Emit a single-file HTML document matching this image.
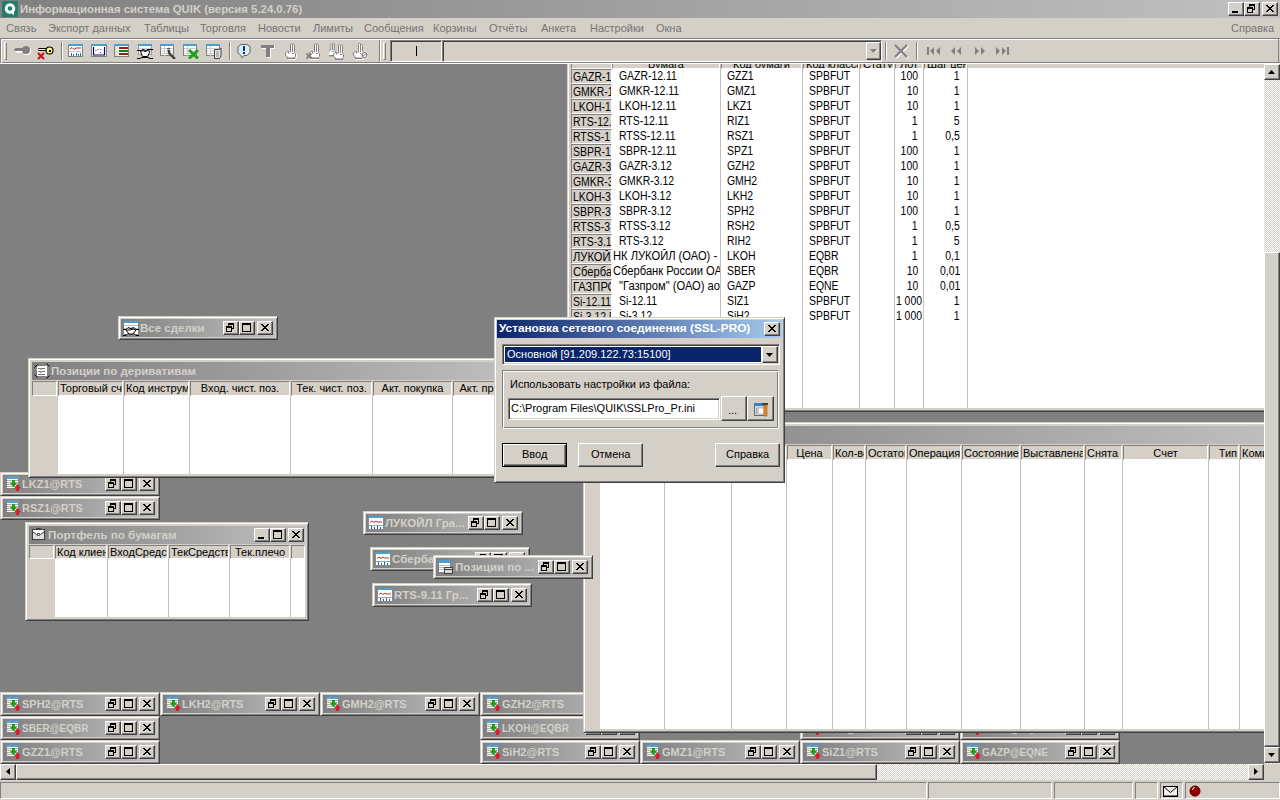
<!DOCTYPE html><html><head><meta charset="utf-8"><style>
*{margin:0;padding:0;box-sizing:content-box}
html,body{width:1280px;height:800px;overflow:hidden;background:#808080;position:relative;font-family:"Liberation Sans",sans-serif}
.a{position:absolute}
.t{font-size:11px;line-height:13px;color:#000;white-space:nowrap}
.tb{font-size:11px;line-height:13px;color:#d4d0c8;font-weight:bold;white-space:nowrap}
.frm{background:#d4d0c8;box-sizing:border-box;border:1px solid;border-color:#d4d0c8 #404040 #404040 #d4d0c8;box-shadow:inset 1px 1px #fff,inset -1px -1px #808080}
.cap{background:linear-gradient(to right,#808080,#c0c0c0)}
.btn{background:#d4d0c8;box-sizing:border-box;border:1px solid;border-color:#fff #404040 #404040 #fff;box-shadow:inset -1px -1px #808080,inset 1px 1px #d4d0c8}
.pbtn{background:#d4d0c8;box-sizing:border-box;border:1px solid;border-color:#fff #404040 #404040 #fff;box-shadow:inset -1px -1px #808080}
.sunk{box-sizing:border-box;border:1px solid;border-color:#808080 #fff #fff #808080;box-shadow:inset 1px 1px #404040,inset -1px -1px #d4d0c8}
.hc{background:#d4d0c8;box-sizing:border-box;border:1px solid;border-color:#808080 #fff #fff #808080;font-size:11px;line-height:12px;white-space:nowrap;overflow:hidden;color:#000}
.dith{background-color:#fff;background-image:linear-gradient(45deg,#d4d0c8 25%,transparent 25%,transparent 75%,#d4d0c8 75%),linear-gradient(45deg,#d4d0c8 25%,transparent 25%,transparent 75%,#d4d0c8 75%);background-size:2px 2px;background-position:0 0,1px 1px}
.m{font-size:11px;line-height:13px;color:#747474;white-space:nowrap}
.vl{background:#c0c0c0}
.cl{font-size:12px;line-height:15px;height:15px;white-space:nowrap;overflow:hidden;color:#000}
.cr{font-size:12px;line-height:15px;height:15px;white-space:nowrap;overflow:hidden;color:#000;text-align:right}
.sx{display:inline-block}
.cl .sx,.cr .sxr{transform:scaleX(0.87);transform-origin:0 0}
.cr .sxr{transform-origin:100% 0}
.sxr{display:inline-block}
</style></head><body>

<div class="a " style="left:0px;top:0px;width:1280px;height:18px;background:linear-gradient(to right,#808080,#c0c0c0)"></div>
<svg class="a" style="left:2px;top:1px" width="16" height="16" viewBox="0 0 16 16"><rect x="0" y="0" width="16" height="16" rx="1" fill="#1f7f6a"/><circle cx="8" cy="7.5" r="5.2" fill="#fff"/><circle cx="8" cy="7.5" r="2.3" fill="#1f7f6a"/><path d="M9 11l3 3.5V10z" fill="#fff"/></svg>
<div class="a tb" style="left:20px;top:2px;font-size:11.35px;line-height:14px">Информационная система QUIK (версия 5.24.0.76)</div>
<div class="a btn" style="left:1228px;top:2px;width:16px;height:14px"></div>
<svg class="a" style="left:1228px;top:2px" width="16" height="14" viewBox="0 0 16 14"><path d="M4 9h6v2H4z" fill="#000" shape-rendering="crispEdges"/></svg>
<div class="a btn" style="left:1244px;top:2px;width:16px;height:14px"></div>
<svg class="a" style="left:1244px;top:2px" width="16" height="14" viewBox="0 0 16 14"><path d="M5 2h6v6H9V7h1V4H6v1H5z M3 5h6v6H3z M4 7v3h4V7z" fill="#000" fill-rule="evenodd" shape-rendering="crispEdges"/></svg>
<div class="a btn" style="left:1262px;top:2px;width:16px;height:14px"></div>
<svg class="a" style="left:1262px;top:2px" width="16" height="14" viewBox="0 0 16 14"><g fill="#000" shape-rendering="crispEdges"><rect x="4" y="3" width="1" height="1"/><rect x="5" y="3" width="1" height="1"/><rect x="10" y="3" width="1" height="1"/><rect x="11" y="3" width="1" height="1"/><rect x="5" y="4" width="1" height="1"/><rect x="6" y="4" width="1" height="1"/><rect x="9" y="4" width="1" height="1"/><rect x="10" y="4" width="1" height="1"/><rect x="6" y="5" width="1" height="1"/><rect x="7" y="5" width="1" height="1"/><rect x="8" y="5" width="1" height="1"/><rect x="9" y="5" width="1" height="1"/><rect x="7" y="6" width="1" height="1"/><rect x="8" y="6" width="1" height="1"/><rect x="6" y="7" width="1" height="1"/><rect x="7" y="7" width="1" height="1"/><rect x="8" y="7" width="1" height="1"/><rect x="9" y="7" width="1" height="1"/><rect x="5" y="8" width="1" height="1"/><rect x="6" y="8" width="1" height="1"/><rect x="9" y="8" width="1" height="1"/><rect x="10" y="8" width="1" height="1"/><rect x="4" y="9" width="1" height="1"/><rect x="5" y="9" width="1" height="1"/><rect x="10" y="9" width="1" height="1"/><rect x="11" y="9" width="1" height="1"/></g></svg>
<div class="a " style="left:0px;top:18px;width:1280px;height:20px;background:#d4d0c8"></div>
<div class="a m" style="left:6px;top:22px;">Связь</div>
<div class="a m" style="left:48px;top:22px;">Экспорт данных</div>
<div class="a m" style="left:144px;top:22px;">Таблицы</div>
<div class="a m" style="left:200px;top:22px;">Торговля</div>
<div class="a m" style="left:258px;top:22px;">Новости</div>
<div class="a m" style="left:313px;top:22px;">Лимиты</div>
<div class="a m" style="left:364px;top:22px;">Сообщения</div>
<div class="a m" style="left:433px;top:22px;">Корзины</div>
<div class="a m" style="left:489px;top:22px;">Отчёты</div>
<div class="a m" style="left:541px;top:22px;">Анкета</div>
<div class="a m" style="left:590px;top:22px;">Настройки</div>
<div class="a m" style="left:656px;top:22px;">Окна</div>
<div class="a m" style="left:1231px;top:22px;">Справка</div>
<div class="a " style="left:0px;top:38px;width:1280px;height:26px;background:#d4d0c8"></div>
<div class="a " style="left:0px;top:38px;width:1280px;height:1px;background:#808080"></div>
<div class="a " style="left:0px;top:39px;width:1280px;height:1px;background:#fff"></div>
<div class="a " style="left:0px;top:62px;width:1280px;height:1px;background:#808080"></div>
<div class="a " style="left:0px;top:63px;width:1280px;height:1px;background:#fff"></div>
<div class="a " style="left:0px;top:38px;width:1px;height:25px;background:#808080"></div>
<div class="a " style="left:1px;top:39px;width:1px;height:24px;background:#fff"></div>
<div class="a " style="left:379px;top:40px;width:1px;height:22px;background:#808080"></div>
<div class="a " style="left:380px;top:40px;width:1px;height:22px;background:#fff"></div>
<div class="a " style="left:1278px;top:38px;width:1px;height:25px;background:#808080"></div>
<div class="a " style="left:4px;top:42px;width:3px;height:18px;box-sizing:border-box;border:1px solid;border-color:#fff #808080 #808080 #fff"></div>
<div class="a " style="left:383px;top:42px;width:3px;height:18px;box-sizing:border-box;border:1px solid;border-color:#fff #808080 #808080 #fff"></div>
<div class="a " style="left:61px;top:42px;width:1px;height:18px;background:#808080"></div>
<div class="a " style="left:62px;top:42px;width:1px;height:18px;background:#fff"></div>
<div class="a " style="left:229px;top:42px;width:1px;height:18px;background:#808080"></div>
<div class="a " style="left:230px;top:42px;width:1px;height:18px;background:#fff"></div>
<div class="a " style="left:885px;top:42px;width:1px;height:18px;background:#808080"></div>
<div class="a " style="left:886px;top:42px;width:1px;height:18px;background:#fff"></div>
<div class="a " style="left:916px;top:42px;width:1px;height:18px;background:#808080"></div>
<div class="a " style="left:917px;top:42px;width:1px;height:18px;background:#fff"></div>
<svg class="a" style="left:13px;top:45px" width="19" height="14" viewBox="0 0 19 14"><g transform="translate(1,1)" fill="#fff"><path d="M1 4.5L2.5 3H10v3H1.5z"/><circle cx="13" cy="5" r="4"/></g><path d="M1 4.5L2.5 3H10v3H1.5z" fill="#808080"/><circle cx="13" cy="5" r="4" fill="#808080"/><rect x="4" y="6" width="2" height="2" fill="#fff"/><rect x="7" y="6" width="2" height="2" fill="#fff"/></svg>
<svg class="a" style="left:37px;top:45px" width="17" height="15" viewBox="0 0 17 15"><path d="M1.5 4.5h8" stroke="#000" stroke-width="3"/><path d="M2 4.5h8" stroke="#ffff80" stroke-width="1"/><circle cx="12.5" cy="5.5" r="3.5" fill="#ffff80" stroke="#000" stroke-width="1.2"/><rect x="12" y="5" width="2" height="2" fill="#000"/><path d="M1 8l6 6M7 8l-6 6" stroke="#c8141e" stroke-width="2.2"/></svg>
<svg class="a" style="left:68px;top:44px" width="15" height="13" viewBox="0 0 15 13"><rect x="0.5" y="0.5" width="14" height="12" fill="#fff" stroke="#808080"/><rect x="0" y="0" width="15" height="2" fill="#4a9fd0"/><path d="M2 5l2-1.5 2 2 2-1.5h5" stroke="#b02020" fill="none"/><path d="M1 7.5h13" stroke="#bcd"/><path d="M3.5 12V9M5.5 12v-2M8.5 12V9M10.5 12v-2M12.5 12V9" stroke="#3070b0"/></svg>
<svg class="a" style="left:91px;top:44px" width="16" height="13" viewBox="0 0 16 13"><rect x="0.5" y="0.5" width="15" height="12" fill="#fff" stroke="#808080"/><rect x="0" y="0" width="16" height="2" fill="#4a9fd0"/><path d="M2.5 3v8h11V3" stroke="#000080" stroke-width="1.2" fill="none"/><path d="M5 6v1M7 5v1M10 5v1M9 8l1 1" stroke="#b02020"/></svg>
<svg class="a" style="left:114px;top:44px" width="15" height="13" viewBox="0 0 15 13"><rect x="0.5" y="0.5" width="14" height="12" fill="#fff" stroke="#808080"/><rect x="0" y="0" width="15" height="2" fill="#4a9fd0"/><rect x="1" y="2" width="3" height="10" fill="#e0e0e0"/><rect x="5" y="3" width="9" height="2" fill="#a01818"/><rect x="5" y="6" width="9" height="2" fill="#108010"/><rect x="5" y="9" width="9" height="2" fill="#a01818"/></svg>
<svg class="a" style="left:137px;top:44px" width="16" height="15" viewBox="0 0 16 15"><rect x="1.5" y="0.5" width="13" height="10" fill="#fff" stroke="#9a9a9a"/><rect x="1" y="0" width="14" height="2" fill="#4a9fd0"/><path d="M2 4.5h12M2 7h12" stroke="#ccc"/><path d="M0 6.5h4l2-1 3 1 2-1h5M0 14.5h3l2-1h6l2 1h3" stroke="#000" fill="none"/><path d="M3.5 7.5l2 5h5l2.5-5-2-1-3 1-2-1z" fill="#fff" stroke="#000"/></svg>
<svg class="a" style="left:160px;top:44px" width="17" height="15" viewBox="0 0 17 15"><rect x="0.5" y="0.5" width="13" height="11" fill="#fff" stroke="#808080"/><rect x="0" y="0" width="14" height="2" fill="#4a9fd0"/><path d="M1 4.5h12M1 7h12M1 9.5h12M4.5 2v10" stroke="#ccc"/><path d="M8 6l1 1v2l6 6" stroke="#404040" stroke-width="2.4" fill="none"/><path d="M7 5l2-1 1 1" stroke="#404040" fill="none"/></svg>
<svg class="a" style="left:183px;top:44px" width="17" height="15" viewBox="0 0 17 15"><rect x="0.5" y="0.5" width="13" height="11" fill="#fff" stroke="#808080"/><rect x="0" y="0" width="14" height="2" fill="#4a9fd0"/><path d="M1 4.5h12M1 7h12M1 9.5h12M4.5 2v10" stroke="#ccc"/><path d="M6 6l9 8.5M15 6l-9 8.5" stroke="#20a020" stroke-width="3"/></svg>
<svg class="a" style="left:206px;top:44px" width="16" height="15" viewBox="0 0 16 15"><rect x="0.5" y="0.5" width="13" height="11" fill="#fff" stroke="#808080"/><rect x="0" y="0" width="14" height="2" fill="#4a9fd0"/><path d="M1 4.5h12M1 7h12M1 9.5h12M4.5 2v10" stroke="#ccc"/><path d="M8.5 5.5h5l1.5-1.5v8l-1.5 2.5h-5z" fill="#e8e8e8" stroke="#404040"/><path d="M10 8h3M10 10h3M10 12h3" stroke="#888"/></svg>
<svg class="a" style="left:237px;top:44px" width="15" height="15" viewBox="0 0 15 15"><path d="M4 0.5h6l3 2v6l-3 3h-3l-2 2.5-1-2.5-3-2.5v-6z" fill="#d8ecfa" stroke="#606060"/><rect x="6" y="2" width="2" height="5" fill="#0a3080"/><rect x="6" y="8" width="2" height="2" fill="#0a3080"/></svg>
<svg class="a" style="left:261px;top:45px" width="15" height="13" viewBox="0 0 15 13"><path d="M1 1h13v3h-4v9H6V4H1z" fill="#fff"/><path d="M0 0h13v3H9v9H5V3H0z" fill="#808080"/></svg>
<svg class="a" style="left:284px;top:43px" width="17" height="17" viewBox="0 0 17 17"><g transform="translate(1,1)" opacity="0.9"><path d="M3 15.5h8M11.5 10v4" stroke="#fff"/></g><g transform="translate(0,0)"><path d="M6.5 9V1.5a1 1 0 0 1 2 0V9M8.5 9V2.5a1 1 0 0 1 2 0V9.5l1 1v3l-1.5 1.5h-6l-2.5-3v-2l1.5-1.5h1.5v2" fill="#fff" stroke="#808080"/><path d="M8 10.5h2" stroke="#808080"/><path d="M3 15.5h8" stroke="#808080"/></g></svg>
<svg class="a" style="left:306px;top:43px" width="17" height="17" viewBox="0 0 17 17"><g transform="translate(1,1)" opacity="0.9"><path d="M3 15.5h8M11.5 10v4" stroke="#fff"/></g><g transform="translate(2,0)"><path d="M6.5 9V1.5a1 1 0 0 1 2 0V9M8.5 9V2.5a1 1 0 0 1 2 0V9.5l1 1v3l-1.5 1.5h-6l-2.5-3v-2l1.5-1.5h1.5v2" fill="#fff" stroke="#808080"/><path d="M8 10.5h2" stroke="#808080"/><path d="M3 15.5h8" stroke="#808080"/></g><path d="M0.5 10.5l5 5M5.5 10.5l-5 5" stroke="#808080" stroke-width="1.8"/></svg>
<svg class="a" style="left:329px;top:43px" width="17" height="17" viewBox="0 0 17 17"><g transform="translate(-4,-1) scale(0.9)"><path d="M6.5 9V1.5a1 1 0 0 1 2 0V9M8.5 9V2.5a1 1 0 0 1 2 0V9.5l1 1v3l-1.5 1.5h-6l-2.5-3v-2l1.5-1.5h1.5v2" fill="#fff" stroke="#808080"/><path d="M8 10.5h2" stroke="#808080"/><path d="M3 15.5h8" stroke="#808080"/></g><g transform="translate(3,1)"><path d="M6.5 9V1.5a1 1 0 0 1 2 0V9M8.5 9V2.5a1 1 0 0 1 2 0V9.5l1 1v3l-1.5 1.5h-6l-2.5-3v-2l1.5-1.5h1.5v2" fill="#fff" stroke="#808080"/><path d="M8 10.5h2" stroke="#808080"/><path d="M3 15.5h8" stroke="#808080"/></g></svg>
<svg class="a" style="left:352px;top:43px" width="17" height="17" viewBox="0 0 17 17"><g transform="translate(1,1)" opacity="0.9"><path d="M3 15.5h8M11.5 10v4" stroke="#fff"/></g><g transform="translate(0,0)"><path d="M6.5 9V1.5a1 1 0 0 1 2 0V9M8.5 9V2.5a1 1 0 0 1 2 0V9.5l1 1v3l-1.5 1.5h-6l-2.5-3v-2l1.5-1.5h1.5v2" fill="#fff" stroke="#808080"/><path d="M8 10.5h2" stroke="#808080"/><path d="M3 15.5h8" stroke="#808080"/></g><circle cx="12.5" cy="12" r="3.5" fill="#808080" stroke="#fff" stroke-width="0.8"/><path d="M13.5 10.5h-2v1.5h2v1.5h-2" stroke="#fff" fill="none"/></svg>
<svg class="a" style="left:926px;top:44px" width="16" height="14" viewBox="0 0 16 14"><path d="M1 3h2v8H1zM8 3v8L4 7zM14 3v8l-4-4z" fill="#808080"/><path d="M3 11V3M8 11l0 0M14 11l0 0" stroke="#fff" stroke-width="0"/></svg>
<svg class="a" style="left:950px;top:44px" width="16" height="14" viewBox="0 0 16 14"><path d="M5 3v8L1 7zM11 3v8L7 7z" fill="#808080"/></svg>
<svg class="a" style="left:974px;top:44px" width="16" height="14" viewBox="0 0 16 14"><path d="M1 3v8l4-4zM7 3v8l4-4z" fill="#808080"/></svg>
<svg class="a" style="left:995px;top:44px" width="16" height="14" viewBox="0 0 16 14"><path d="M1 3v8l4-4zM7 3v8l4-4zM12 3h2v8h-2z" fill="#808080"/></svg>
<svg class="a" style="left:893px;top:43px" width="16" height="16" viewBox="0 0 16 16"><path d="M2 2l12 12M14 2L2 14" stroke="#fff" stroke-width="2.2" transform="translate(1,1)"/><path d="M2 2l12 12M14 2L2 14" stroke="#808080" stroke-width="2.2"/></svg>
<div class="a sunk" style="left:390px;top:40px;width:52px;height:22px;background:#d4d0c8"></div>
<div class="a " style="left:416px;top:46px;width:1px;height:10px;background:#000"></div>
<div class="a sunk" style="left:442px;top:40px;width:440px;height:22px;background:#d4d0c8"></div>
<div class="a pbtn" style="left:866px;top:42px;width:15px;height:18px;"></div>
<svg class="a" style="left:866px;top:42px" width="15" height="18" viewBox="0 0 15 18"><path d="M4 7h7l-3.5 4z" fill="#808080"/><path d="M8 11l3.5-4v1l-3 3.5z" fill="#fff"/></svg>
<div class="a" style="left:0;top:64px;width:1264px;height:700px;overflow:hidden">
<div class="a frm" style="left:480px;top:628px;width:160px;height:24px;"></div>
<div class="a" style="left:483px;top:631px;width:154px;height:18px;background:linear-gradient(to right,#808080,#c0c0c0)"></div>
<svg class="a" style="left:485px;top:632px;" width="16" height="16" viewBox="0 0 16 16"><rect x="1" y="0.5" width="13" height="2.5" fill="#5aa0d0"/><rect x="2" y="3" width="11" height="9" fill="#fff"/><path d="M2 4.5h11M2 6.5h11M2 8.5h11M2 10.5h11" stroke="#b0b0b0" stroke-width="1"/><path d="M7 4h3v3h2l-3.5 4.5L5 7h2z" fill="#20a010"/><path d="M12.5 8l3.5 4.5h-2V15h-3v-2.5H9z" fill="#d81e28"/></svg>
<div class="a tb" style="left:502px;top:634px;">GZH2@RTS</div>
<div class="a btn" style="left:585px;top:633px;width:16px;height:14px"></div>
<svg class="a" style="left:585px;top:633px;" width="16" height="14" viewBox="0 0 16 14"><path d="M5 2h6v6H9V7h1V4H6v1H5z M3 5h6v6H3z M4 7v3h4V7z" fill="#000" fill-rule="evenodd" shape-rendering="crispEdges"/></svg>
<div class="a btn" style="left:601px;top:633px;width:16px;height:14px"></div>
<svg class="a" style="left:601px;top:633px;" width="16" height="14" viewBox="0 0 16 14"><path d="M3 2h9v9H3z M4 4v6h7V4z" fill="#000" fill-rule="evenodd" shape-rendering="crispEdges"/></svg>
<div class="a btn" style="left:619px;top:633px;width:16px;height:14px"></div>
<svg class="a" style="left:619px;top:633px;" width="16" height="14" viewBox="0 0 16 14"><g fill="#000" shape-rendering="crispEdges"><rect x="4" y="3" width="1" height="1"/><rect x="5" y="3" width="1" height="1"/><rect x="10" y="3" width="1" height="1"/><rect x="11" y="3" width="1" height="1"/><rect x="5" y="4" width="1" height="1"/><rect x="6" y="4" width="1" height="1"/><rect x="9" y="4" width="1" height="1"/><rect x="10" y="4" width="1" height="1"/><rect x="6" y="5" width="1" height="1"/><rect x="7" y="5" width="1" height="1"/><rect x="8" y="5" width="1" height="1"/><rect x="9" y="5" width="1" height="1"/><rect x="7" y="6" width="1" height="1"/><rect x="8" y="6" width="1" height="1"/><rect x="6" y="7" width="1" height="1"/><rect x="7" y="7" width="1" height="1"/><rect x="8" y="7" width="1" height="1"/><rect x="9" y="7" width="1" height="1"/><rect x="5" y="8" width="1" height="1"/><rect x="6" y="8" width="1" height="1"/><rect x="9" y="8" width="1" height="1"/><rect x="10" y="8" width="1" height="1"/><rect x="4" y="9" width="1" height="1"/><rect x="5" y="9" width="1" height="1"/><rect x="10" y="9" width="1" height="1"/><rect x="11" y="9" width="1" height="1"/></g></svg>
<div class="a frm" style="left:480px;top:652px;width:160px;height:24px;"></div>
<div class="a" style="left:483px;top:655px;width:154px;height:18px;background:linear-gradient(to right,#808080,#c0c0c0)"></div>
<svg class="a" style="left:485px;top:656px;" width="16" height="16" viewBox="0 0 16 16"><rect x="1" y="0.5" width="13" height="2.5" fill="#5aa0d0"/><rect x="2" y="3" width="11" height="9" fill="#fff"/><path d="M2 4.5h11M2 6.5h11M2 8.5h11M2 10.5h11" stroke="#b0b0b0" stroke-width="1"/><path d="M7 4h3v3h2l-3.5 4.5L5 7h2z" fill="#20a010"/><path d="M12.5 8l3.5 4.5h-2V15h-3v-2.5H9z" fill="#d81e28"/></svg>
<div class="a tb" style="left:502px;top:658px;transform:scaleX(0.91);transform-origin:0 0">LKOH@EQBR</div>
<div class="a btn" style="left:585px;top:657px;width:16px;height:14px"></div>
<svg class="a" style="left:585px;top:657px;" width="16" height="14" viewBox="0 0 16 14"><path d="M5 2h6v6H9V7h1V4H6v1H5z M3 5h6v6H3z M4 7v3h4V7z" fill="#000" fill-rule="evenodd" shape-rendering="crispEdges"/></svg>
<div class="a btn" style="left:601px;top:657px;width:16px;height:14px"></div>
<svg class="a" style="left:601px;top:657px;" width="16" height="14" viewBox="0 0 16 14"><path d="M3 2h9v9H3z M4 4v6h7V4z" fill="#000" fill-rule="evenodd" shape-rendering="crispEdges"/></svg>
<div class="a btn" style="left:619px;top:657px;width:16px;height:14px"></div>
<svg class="a" style="left:619px;top:657px;" width="16" height="14" viewBox="0 0 16 14"><g fill="#000" shape-rendering="crispEdges"><rect x="4" y="3" width="1" height="1"/><rect x="5" y="3" width="1" height="1"/><rect x="10" y="3" width="1" height="1"/><rect x="11" y="3" width="1" height="1"/><rect x="5" y="4" width="1" height="1"/><rect x="6" y="4" width="1" height="1"/><rect x="9" y="4" width="1" height="1"/><rect x="10" y="4" width="1" height="1"/><rect x="6" y="5" width="1" height="1"/><rect x="7" y="5" width="1" height="1"/><rect x="8" y="5" width="1" height="1"/><rect x="9" y="5" width="1" height="1"/><rect x="7" y="6" width="1" height="1"/><rect x="8" y="6" width="1" height="1"/><rect x="6" y="7" width="1" height="1"/><rect x="7" y="7" width="1" height="1"/><rect x="8" y="7" width="1" height="1"/><rect x="9" y="7" width="1" height="1"/><rect x="5" y="8" width="1" height="1"/><rect x="6" y="8" width="1" height="1"/><rect x="9" y="8" width="1" height="1"/><rect x="10" y="8" width="1" height="1"/><rect x="4" y="9" width="1" height="1"/><rect x="5" y="9" width="1" height="1"/><rect x="10" y="9" width="1" height="1"/><rect x="11" y="9" width="1" height="1"/></g></svg>
<div class="a frm" style="left:800px;top:652px;width:160px;height:24px;"></div>
<div class="a" style="left:803px;top:655px;width:154px;height:18px;background:linear-gradient(to right,#808080,#c0c0c0)"></div>
<svg class="a" style="left:805px;top:656px;" width="16" height="16" viewBox="0 0 16 16"><rect x="1" y="0.5" width="13" height="2.5" fill="#5aa0d0"/><rect x="2" y="3" width="11" height="9" fill="#fff"/><path d="M2 4.5h11M2 6.5h11M2 8.5h11M2 10.5h11" stroke="#b0b0b0" stroke-width="1"/><path d="M7 4h3v3h2l-3.5 4.5L5 7h2z" fill="#20a010"/><path d="M12.5 8l3.5 4.5h-2V15h-3v-2.5H9z" fill="#d81e28"/></svg>
<div class="a tb" style="left:822px;top:658px;">SIZ1@RTS</div>
<div class="a btn" style="left:905px;top:657px;width:16px;height:14px"></div>
<svg class="a" style="left:905px;top:657px;" width="16" height="14" viewBox="0 0 16 14"><path d="M5 2h6v6H9V7h1V4H6v1H5z M3 5h6v6H3z M4 7v3h4V7z" fill="#000" fill-rule="evenodd" shape-rendering="crispEdges"/></svg>
<div class="a btn" style="left:921px;top:657px;width:16px;height:14px"></div>
<svg class="a" style="left:921px;top:657px;" width="16" height="14" viewBox="0 0 16 14"><path d="M3 2h9v9H3z M4 4v6h7V4z" fill="#000" fill-rule="evenodd" shape-rendering="crispEdges"/></svg>
<div class="a btn" style="left:939px;top:657px;width:16px;height:14px"></div>
<svg class="a" style="left:939px;top:657px;" width="16" height="14" viewBox="0 0 16 14"><g fill="#000" shape-rendering="crispEdges"><rect x="4" y="3" width="1" height="1"/><rect x="5" y="3" width="1" height="1"/><rect x="10" y="3" width="1" height="1"/><rect x="11" y="3" width="1" height="1"/><rect x="5" y="4" width="1" height="1"/><rect x="6" y="4" width="1" height="1"/><rect x="9" y="4" width="1" height="1"/><rect x="10" y="4" width="1" height="1"/><rect x="6" y="5" width="1" height="1"/><rect x="7" y="5" width="1" height="1"/><rect x="8" y="5" width="1" height="1"/><rect x="9" y="5" width="1" height="1"/><rect x="7" y="6" width="1" height="1"/><rect x="8" y="6" width="1" height="1"/><rect x="6" y="7" width="1" height="1"/><rect x="7" y="7" width="1" height="1"/><rect x="8" y="7" width="1" height="1"/><rect x="9" y="7" width="1" height="1"/><rect x="5" y="8" width="1" height="1"/><rect x="6" y="8" width="1" height="1"/><rect x="9" y="8" width="1" height="1"/><rect x="10" y="8" width="1" height="1"/><rect x="4" y="9" width="1" height="1"/><rect x="5" y="9" width="1" height="1"/><rect x="10" y="9" width="1" height="1"/><rect x="11" y="9" width="1" height="1"/></g></svg>
<div class="a frm" style="left:960px;top:652px;width:160px;height:24px;"></div>
<div class="a" style="left:963px;top:655px;width:154px;height:18px;background:linear-gradient(to right,#808080,#c0c0c0)"></div>
<svg class="a" style="left:965px;top:656px;" width="16" height="16" viewBox="0 0 16 16"><rect x="1" y="0.5" width="13" height="2.5" fill="#5aa0d0"/><rect x="2" y="3" width="11" height="9" fill="#fff"/><path d="M2 4.5h11M2 6.5h11M2 8.5h11M2 10.5h11" stroke="#b0b0b0" stroke-width="1"/><path d="M7 4h3v3h2l-3.5 4.5L5 7h2z" fill="#20a010"/><path d="M12.5 8l3.5 4.5h-2V15h-3v-2.5H9z" fill="#d81e28"/></svg>
<div class="a tb" style="left:982px;top:658px;transform:scaleX(0.91);transform-origin:0 0">GAZP@EQNE</div>
<div class="a btn" style="left:1065px;top:657px;width:16px;height:14px"></div>
<svg class="a" style="left:1065px;top:657px;" width="16" height="14" viewBox="0 0 16 14"><path d="M5 2h6v6H9V7h1V4H6v1H5z M3 5h6v6H3z M4 7v3h4V7z" fill="#000" fill-rule="evenodd" shape-rendering="crispEdges"/></svg>
<div class="a btn" style="left:1081px;top:657px;width:16px;height:14px"></div>
<svg class="a" style="left:1081px;top:657px;" width="16" height="14" viewBox="0 0 16 14"><path d="M3 2h9v9H3z M4 4v6h7V4z" fill="#000" fill-rule="evenodd" shape-rendering="crispEdges"/></svg>
<div class="a btn" style="left:1099px;top:657px;width:16px;height:14px"></div>
<svg class="a" style="left:1099px;top:657px;" width="16" height="14" viewBox="0 0 16 14"><g fill="#000" shape-rendering="crispEdges"><rect x="4" y="3" width="1" height="1"/><rect x="5" y="3" width="1" height="1"/><rect x="10" y="3" width="1" height="1"/><rect x="11" y="3" width="1" height="1"/><rect x="5" y="4" width="1" height="1"/><rect x="6" y="4" width="1" height="1"/><rect x="9" y="4" width="1" height="1"/><rect x="10" y="4" width="1" height="1"/><rect x="6" y="5" width="1" height="1"/><rect x="7" y="5" width="1" height="1"/><rect x="8" y="5" width="1" height="1"/><rect x="9" y="5" width="1" height="1"/><rect x="7" y="6" width="1" height="1"/><rect x="8" y="6" width="1" height="1"/><rect x="6" y="7" width="1" height="1"/><rect x="7" y="7" width="1" height="1"/><rect x="8" y="7" width="1" height="1"/><rect x="9" y="7" width="1" height="1"/><rect x="5" y="8" width="1" height="1"/><rect x="6" y="8" width="1" height="1"/><rect x="9" y="8" width="1" height="1"/><rect x="10" y="8" width="1" height="1"/><rect x="4" y="9" width="1" height="1"/><rect x="5" y="9" width="1" height="1"/><rect x="10" y="9" width="1" height="1"/><rect x="11" y="9" width="1" height="1"/></g></svg>
<div class="a frm" style="left:567px;top:-44px;width:760px;height:392px;"></div>
<div class="a " style="left:571px;top:-11px;width:760px;height:15px;background:#d4d0c8"></div>
<div class="a " style="left:612px;top:4px;width:700px;height:340px;background:#fff"></div>
<div class="a vl" style="left:720px;top:0px;width:1px;height:344px;"></div>
<div class="a vl" style="left:802px;top:0px;width:1px;height:344px;"></div>
<div class="a vl" style="left:859px;top:0px;width:1px;height:344px;"></div>
<div class="a vl" style="left:894px;top:0px;width:1px;height:344px;"></div>
<div class="a vl" style="left:923px;top:0px;width:1px;height:344px;"></div>
<div class="a vl" style="left:967px;top:0px;width:1px;height:344px;"></div>
<div class="a hc" style="left:571px;top:-11px;width:41px;height:16px;text-align:center;padding:4px 2px 0;box-sizing:border-box"><span class="sx"></span></div>
<div class="a hc" style="left:612px;top:-11px;width:108px;height:16px;text-align:center;padding:4px 2px 0;box-sizing:border-box"><span class="sx">Бумага</span></div>
<div class="a hc" style="left:721px;top:-11px;width:81px;height:16px;text-align:center;padding:4px 2px 0;box-sizing:border-box"><span class="sx">Код бумаги</span></div>
<div class="a hc" style="left:803px;top:-11px;width:56px;height:16px;text-align:center;padding:4px 2px 0;box-sizing:border-box"><span class="sx">Код класса</span></div>
<div class="a hc" style="left:860px;top:-11px;width:34px;height:16px;text-align:center;padding:4px 2px 0;box-sizing:border-box"><span class="sx">Статус</span></div>
<div class="a hc" style="left:895px;top:-11px;width:28px;height:16px;text-align:center;padding:4px 2px 0;box-sizing:border-box"><span class="sx">Лот</span></div>
<div class="a hc" style="left:924px;top:-11px;width:43px;height:16px;text-align:center;padding:4px 2px 0;box-sizing:border-box"><span class="sx">Шаг цены</span></div>
<div class="a hc" style="left:571px;top:5px;width:41px;height:15px;padding-left:1px;line-height:14px;font-size:12px"><span class="sx" style="transform:scaleX(0.87);transform-origin:0 0">GAZR-1</span></div>
<div class="a cl" style="left:619px;top:5px;width:101px"><span class="sx">GAZR-12.11</span></div>
<div class="a cl" style="left:727px;top:5px;width:75px"><span class="sx">GZZ1</span></div>
<div class="a cl" style="left:809px;top:5px;width:50px"><span class="sx">SPBFUT</span></div>
<div class="a cr" style="left:880px;top:5px;width:38px"><span class="sxr">100</span></div>
<div class="a cr" style="left:924px;top:5px;width:36px"><span class="sxr">1</span></div>
<div class="a hc" style="left:571px;top:20px;width:41px;height:15px;padding-left:1px;line-height:14px;font-size:12px"><span class="sx" style="transform:scaleX(0.87);transform-origin:0 0">GMKR-1</span></div>
<div class="a cl" style="left:619px;top:20px;width:101px"><span class="sx">GMKR-12.11</span></div>
<div class="a cl" style="left:727px;top:20px;width:75px"><span class="sx">GMZ1</span></div>
<div class="a cl" style="left:809px;top:20px;width:50px"><span class="sx">SPBFUT</span></div>
<div class="a cr" style="left:880px;top:20px;width:38px"><span class="sxr">10</span></div>
<div class="a cr" style="left:924px;top:20px;width:36px"><span class="sxr">1</span></div>
<div class="a hc" style="left:571px;top:35px;width:41px;height:15px;padding-left:1px;line-height:14px;font-size:12px"><span class="sx" style="transform:scaleX(0.87);transform-origin:0 0">LKOH-1</span></div>
<div class="a cl" style="left:619px;top:35px;width:101px"><span class="sx">LKOH-12.11</span></div>
<div class="a cl" style="left:727px;top:35px;width:75px"><span class="sx">LKZ1</span></div>
<div class="a cl" style="left:809px;top:35px;width:50px"><span class="sx">SPBFUT</span></div>
<div class="a cr" style="left:880px;top:35px;width:38px"><span class="sxr">10</span></div>
<div class="a cr" style="left:924px;top:35px;width:36px"><span class="sxr">1</span></div>
<div class="a hc" style="left:571px;top:50px;width:41px;height:15px;padding-left:1px;line-height:14px;font-size:12px"><span class="sx" style="transform:scaleX(0.87);transform-origin:0 0">RTS-12.</span></div>
<div class="a cl" style="left:619px;top:50px;width:101px"><span class="sx">RTS-12.11</span></div>
<div class="a cl" style="left:727px;top:50px;width:75px"><span class="sx">RIZ1</span></div>
<div class="a cl" style="left:809px;top:50px;width:50px"><span class="sx">SPBFUT</span></div>
<div class="a cr" style="left:880px;top:50px;width:38px"><span class="sxr">1</span></div>
<div class="a cr" style="left:924px;top:50px;width:36px"><span class="sxr">5</span></div>
<div class="a hc" style="left:571px;top:65px;width:41px;height:15px;padding-left:1px;line-height:14px;font-size:12px"><span class="sx" style="transform:scaleX(0.87);transform-origin:0 0">RTSS-1</span></div>
<div class="a cl" style="left:619px;top:65px;width:101px"><span class="sx">RTSS-12.11</span></div>
<div class="a cl" style="left:727px;top:65px;width:75px"><span class="sx">RSZ1</span></div>
<div class="a cl" style="left:809px;top:65px;width:50px"><span class="sx">SPBFUT</span></div>
<div class="a cr" style="left:880px;top:65px;width:38px"><span class="sxr">1</span></div>
<div class="a cr" style="left:924px;top:65px;width:36px"><span class="sxr">0,5</span></div>
<div class="a hc" style="left:571px;top:80px;width:41px;height:15px;padding-left:1px;line-height:14px;font-size:12px"><span class="sx" style="transform:scaleX(0.87);transform-origin:0 0">SBPR-1</span></div>
<div class="a cl" style="left:619px;top:80px;width:101px"><span class="sx">SBPR-12.11</span></div>
<div class="a cl" style="left:727px;top:80px;width:75px"><span class="sx">SPZ1</span></div>
<div class="a cl" style="left:809px;top:80px;width:50px"><span class="sx">SPBFUT</span></div>
<div class="a cr" style="left:880px;top:80px;width:38px"><span class="sxr">100</span></div>
<div class="a cr" style="left:924px;top:80px;width:36px"><span class="sxr">1</span></div>
<div class="a hc" style="left:571px;top:95px;width:41px;height:15px;padding-left:1px;line-height:14px;font-size:12px"><span class="sx" style="transform:scaleX(0.87);transform-origin:0 0">GAZR-3</span></div>
<div class="a cl" style="left:619px;top:95px;width:101px"><span class="sx">GAZR-3.12</span></div>
<div class="a cl" style="left:727px;top:95px;width:75px"><span class="sx">GZH2</span></div>
<div class="a cl" style="left:809px;top:95px;width:50px"><span class="sx">SPBFUT</span></div>
<div class="a cr" style="left:880px;top:95px;width:38px"><span class="sxr">100</span></div>
<div class="a cr" style="left:924px;top:95px;width:36px"><span class="sxr">1</span></div>
<div class="a hc" style="left:571px;top:110px;width:41px;height:15px;padding-left:1px;line-height:14px;font-size:12px"><span class="sx" style="transform:scaleX(0.87);transform-origin:0 0">GMKR-3</span></div>
<div class="a cl" style="left:619px;top:110px;width:101px"><span class="sx">GMKR-3.12</span></div>
<div class="a cl" style="left:727px;top:110px;width:75px"><span class="sx">GMH2</span></div>
<div class="a cl" style="left:809px;top:110px;width:50px"><span class="sx">SPBFUT</span></div>
<div class="a cr" style="left:880px;top:110px;width:38px"><span class="sxr">10</span></div>
<div class="a cr" style="left:924px;top:110px;width:36px"><span class="sxr">1</span></div>
<div class="a hc" style="left:571px;top:125px;width:41px;height:15px;padding-left:1px;line-height:14px;font-size:12px"><span class="sx" style="transform:scaleX(0.87);transform-origin:0 0">LKOH-3</span></div>
<div class="a cl" style="left:619px;top:125px;width:101px"><span class="sx">LKOH-3.12</span></div>
<div class="a cl" style="left:727px;top:125px;width:75px"><span class="sx">LKH2</span></div>
<div class="a cl" style="left:809px;top:125px;width:50px"><span class="sx">SPBFUT</span></div>
<div class="a cr" style="left:880px;top:125px;width:38px"><span class="sxr">10</span></div>
<div class="a cr" style="left:924px;top:125px;width:36px"><span class="sxr">1</span></div>
<div class="a hc" style="left:571px;top:140px;width:41px;height:15px;padding-left:1px;line-height:14px;font-size:12px"><span class="sx" style="transform:scaleX(0.87);transform-origin:0 0">SBPR-3</span></div>
<div class="a cl" style="left:619px;top:140px;width:101px"><span class="sx">SBPR-3.12</span></div>
<div class="a cl" style="left:727px;top:140px;width:75px"><span class="sx">SPH2</span></div>
<div class="a cl" style="left:809px;top:140px;width:50px"><span class="sx">SPBFUT</span></div>
<div class="a cr" style="left:880px;top:140px;width:38px"><span class="sxr">100</span></div>
<div class="a cr" style="left:924px;top:140px;width:36px"><span class="sxr">1</span></div>
<div class="a hc" style="left:571px;top:155px;width:41px;height:15px;padding-left:1px;line-height:14px;font-size:12px"><span class="sx" style="transform:scaleX(0.87);transform-origin:0 0">RTSS-3</span></div>
<div class="a cl" style="left:619px;top:155px;width:101px"><span class="sx">RTSS-3.12</span></div>
<div class="a cl" style="left:727px;top:155px;width:75px"><span class="sx">RSH2</span></div>
<div class="a cl" style="left:809px;top:155px;width:50px"><span class="sx">SPBFUT</span></div>
<div class="a cr" style="left:880px;top:155px;width:38px"><span class="sxr">1</span></div>
<div class="a cr" style="left:924px;top:155px;width:36px"><span class="sxr">0,5</span></div>
<div class="a hc" style="left:571px;top:170px;width:41px;height:15px;padding-left:1px;line-height:14px;font-size:12px"><span class="sx" style="transform:scaleX(0.87);transform-origin:0 0">RTS-3.1</span></div>
<div class="a cl" style="left:619px;top:170px;width:101px"><span class="sx">RTS-3.12</span></div>
<div class="a cl" style="left:727px;top:170px;width:75px"><span class="sx">RIH2</span></div>
<div class="a cl" style="left:809px;top:170px;width:50px"><span class="sx">SPBFUT</span></div>
<div class="a cr" style="left:880px;top:170px;width:38px"><span class="sxr">1</span></div>
<div class="a cr" style="left:924px;top:170px;width:36px"><span class="sxr">5</span></div>
<div class="a hc" style="left:571px;top:185px;width:41px;height:15px;padding-left:1px;line-height:14px;font-size:12px"><span class="sx" style="transform:scaleX(0.93);transform-origin:0 0">ЛУКОЙЛ</span></div>
<div class="a cl" style="left:613px;top:185px;width:107px"><span class="sx" style="transform:scaleX(0.93)">НК ЛУКОЙЛ (ОАО) -</span></div>
<div class="a cl" style="left:727px;top:185px;width:75px"><span class="sx">LKOH</span></div>
<div class="a cl" style="left:809px;top:185px;width:50px"><span class="sx">EQBR</span></div>
<div class="a cr" style="left:880px;top:185px;width:38px"><span class="sxr">1</span></div>
<div class="a cr" style="left:924px;top:185px;width:36px"><span class="sxr">0,1</span></div>
<div class="a hc" style="left:571px;top:200px;width:41px;height:15px;padding-left:1px;line-height:14px;font-size:12px"><span class="sx" style="transform:scaleX(0.93);transform-origin:0 0">Сбербанк</span></div>
<div class="a cl" style="left:613px;top:200px;width:107px"><span class="sx" style="transform:scaleX(0.93)">Сбербанк России ОА</span></div>
<div class="a cl" style="left:727px;top:200px;width:75px"><span class="sx">SBER</span></div>
<div class="a cl" style="left:809px;top:200px;width:50px"><span class="sx">EQBR</span></div>
<div class="a cr" style="left:880px;top:200px;width:38px"><span class="sxr">10</span></div>
<div class="a cr" style="left:924px;top:200px;width:36px"><span class="sxr">0,01</span></div>
<div class="a hc" style="left:571px;top:215px;width:41px;height:15px;padding-left:1px;line-height:14px;font-size:12px"><span class="sx" style="transform:scaleX(0.93);transform-origin:0 0">ГАЗПРОМ</span></div>
<div class="a cl" style="left:619px;top:215px;width:101px"><span class="sx" style="transform:scaleX(0.93)">"Газпром" (ОАО) ао</span></div>
<div class="a cl" style="left:727px;top:215px;width:75px"><span class="sx">GAZP</span></div>
<div class="a cl" style="left:809px;top:215px;width:50px"><span class="sx">EQNE</span></div>
<div class="a cr" style="left:880px;top:215px;width:38px"><span class="sxr">10</span></div>
<div class="a cr" style="left:924px;top:215px;width:36px"><span class="sxr">0,01</span></div>
<div class="a hc" style="left:571px;top:230px;width:41px;height:15px;padding-left:1px;line-height:14px;font-size:12px"><span class="sx" style="transform:scaleX(0.87);transform-origin:0 0">Si-12.11</span></div>
<div class="a cl" style="left:619px;top:230px;width:101px"><span class="sx">Si-12.11</span></div>
<div class="a cl" style="left:727px;top:230px;width:75px"><span class="sx">SIZ1</span></div>
<div class="a cl" style="left:809px;top:230px;width:50px"><span class="sx">SPBFUT</span></div>
<div class="a cr" style="left:880px;top:230px;width:42px"><span class="sxr">1 000</span></div>
<div class="a cr" style="left:924px;top:230px;width:36px"><span class="sxr">1</span></div>
<div class="a hc" style="left:571px;top:245px;width:41px;height:15px;padding-left:1px;line-height:14px;font-size:12px"><span class="sx" style="transform:scaleX(0.87);transform-origin:0 0">Si-3.12 [</span></div>
<div class="a cl" style="left:619px;top:245px;width:101px"><span class="sx">Si-3.12</span></div>
<div class="a cl" style="left:727px;top:245px;width:75px"><span class="sx">SiH2</span></div>
<div class="a cl" style="left:809px;top:245px;width:50px"><span class="sx">SPBFUT</span></div>
<div class="a cr" style="left:880px;top:245px;width:42px"><span class="sxr">1 000</span></div>
<div class="a cr" style="left:924px;top:245px;width:36px"><span class="sxr">1</span></div>
<div class="a frm" style="left:583px;top:358px;width:760px;height:311px;"></div>
<div class="a" style="left:587px;top:362px;width:700px;height:18px;background:linear-gradient(to right,#808080,#c0c0c0)"></div>
<div class="a " style="left:586px;top:380px;width:700px;height:286px;background:#d4d0c8"></div>
<div class="a " style="left:600px;top:395px;width:680px;height:270px;background:#fff"></div>
<div class="a vl" style="left:664px;top:395px;width:1px;height:270px;"></div>
<div class="a vl" style="left:731px;top:395px;width:1px;height:270px;"></div>
<div class="a vl" style="left:786px;top:395px;width:1px;height:270px;"></div>
<div class="a vl" style="left:832px;top:395px;width:1px;height:270px;"></div>
<div class="a vl" style="left:865px;top:395px;width:1px;height:270px;"></div>
<div class="a vl" style="left:906px;top:395px;width:1px;height:270px;"></div>
<div class="a vl" style="left:961px;top:395px;width:1px;height:270px;"></div>
<div class="a vl" style="left:1020px;top:395px;width:1px;height:270px;"></div>
<div class="a vl" style="left:1084px;top:395px;width:1px;height:270px;"></div>
<div class="a vl" style="left:1122px;top:395px;width:1px;height:270px;"></div>
<div class="a vl" style="left:1208px;top:395px;width:1px;height:270px;"></div>
<div class="a vl" style="left:1239px;top:395px;width:1px;height:270px;"></div>
<div class="a hc" style="left:587px;top:381px;width:13px;height:15px;text-align:left;padding:1px 1px 0;box-sizing:border-box"><span class="sx"></span></div>
<div class="a hc" style="left:600px;top:381px;width:64px;height:15px;text-align:left;padding:1px 1px 0;box-sizing:border-box"><span class="sx"></span></div>
<div class="a hc" style="left:665px;top:381px;width:66px;height:15px;text-align:left;padding:1px 1px 0;box-sizing:border-box"><span class="sx"></span></div>
<div class="a hc" style="left:732px;top:381px;width:54px;height:15px;text-align:left;padding:1px 1px 0;box-sizing:border-box"><span class="sx"></span></div>
<div class="a hc" style="left:787px;top:381px;width:45px;height:15px;text-align:center;padding:1px 1px 0;box-sizing:border-box"><span class="sx">Цена</span></div>
<div class="a hc" style="left:833px;top:381px;width:32px;height:15px;text-align:left;padding:1px 1px 0;box-sizing:border-box"><span class="sx">Кол-во</span></div>
<div class="a hc" style="left:866px;top:381px;width:40px;height:15px;text-align:left;padding:1px 1px 0;box-sizing:border-box"><span class="sx">Остаток</span></div>
<div class="a hc" style="left:907px;top:381px;width:54px;height:15px;text-align:left;padding:1px 1px 0;box-sizing:border-box"><span class="sx">Операция</span></div>
<div class="a hc" style="left:962px;top:381px;width:58px;height:15px;text-align:left;padding:1px 1px 0;box-sizing:border-box"><span class="sx">Состояние</span></div>
<div class="a hc" style="left:1021px;top:381px;width:63px;height:15px;text-align:left;padding:1px 1px 0;box-sizing:border-box"><span class="sx">Выставлена</span></div>
<div class="a hc" style="left:1085px;top:381px;width:37px;height:15px;text-align:left;padding:1px 1px 0;box-sizing:border-box"><span class="sx">Снята (</span></div>
<div class="a hc" style="left:1123px;top:381px;width:85px;height:15px;text-align:center;padding:1px 1px 0;box-sizing:border-box"><span class="sx">Счет</span></div>
<div class="a hc" style="left:1209px;top:381px;width:30px;height:15px;text-align:right;padding:1px 1px 0;box-sizing:border-box"><span class="sx">Тип</span></div>
<div class="a hc" style="left:1240px;top:381px;width:40px;height:15px;text-align:left;padding:1px 1px 0;box-sizing:border-box"><span class="sx">Комиссия</span></div>
<div class="a frm" style="left:0px;top:628px;width:160px;height:24px;"></div>
<div class="a" style="left:3px;top:631px;width:154px;height:18px;background:linear-gradient(to right,#808080,#c0c0c0)"></div>
<svg class="a" style="left:5px;top:632px;" width="16" height="16" viewBox="0 0 16 16"><rect x="1" y="0.5" width="13" height="2.5" fill="#5aa0d0"/><rect x="2" y="3" width="11" height="9" fill="#fff"/><path d="M2 4.5h11M2 6.5h11M2 8.5h11M2 10.5h11" stroke="#b0b0b0" stroke-width="1"/><path d="M7 4h3v3h2l-3.5 4.5L5 7h2z" fill="#20a010"/><path d="M12.5 8l3.5 4.5h-2V15h-3v-2.5H9z" fill="#d81e28"/></svg>
<div class="a tb" style="left:22px;top:634px;">SPH2@RTS</div>
<div class="a btn" style="left:105px;top:633px;width:16px;height:14px"></div>
<svg class="a" style="left:105px;top:633px;" width="16" height="14" viewBox="0 0 16 14"><path d="M5 2h6v6H9V7h1V4H6v1H5z M3 5h6v6H3z M4 7v3h4V7z" fill="#000" fill-rule="evenodd" shape-rendering="crispEdges"/></svg>
<div class="a btn" style="left:121px;top:633px;width:16px;height:14px"></div>
<svg class="a" style="left:121px;top:633px;" width="16" height="14" viewBox="0 0 16 14"><path d="M3 2h9v9H3z M4 4v6h7V4z" fill="#000" fill-rule="evenodd" shape-rendering="crispEdges"/></svg>
<div class="a btn" style="left:139px;top:633px;width:16px;height:14px"></div>
<svg class="a" style="left:139px;top:633px;" width="16" height="14" viewBox="0 0 16 14"><g fill="#000" shape-rendering="crispEdges"><rect x="4" y="3" width="1" height="1"/><rect x="5" y="3" width="1" height="1"/><rect x="10" y="3" width="1" height="1"/><rect x="11" y="3" width="1" height="1"/><rect x="5" y="4" width="1" height="1"/><rect x="6" y="4" width="1" height="1"/><rect x="9" y="4" width="1" height="1"/><rect x="10" y="4" width="1" height="1"/><rect x="6" y="5" width="1" height="1"/><rect x="7" y="5" width="1" height="1"/><rect x="8" y="5" width="1" height="1"/><rect x="9" y="5" width="1" height="1"/><rect x="7" y="6" width="1" height="1"/><rect x="8" y="6" width="1" height="1"/><rect x="6" y="7" width="1" height="1"/><rect x="7" y="7" width="1" height="1"/><rect x="8" y="7" width="1" height="1"/><rect x="9" y="7" width="1" height="1"/><rect x="5" y="8" width="1" height="1"/><rect x="6" y="8" width="1" height="1"/><rect x="9" y="8" width="1" height="1"/><rect x="10" y="8" width="1" height="1"/><rect x="4" y="9" width="1" height="1"/><rect x="5" y="9" width="1" height="1"/><rect x="10" y="9" width="1" height="1"/><rect x="11" y="9" width="1" height="1"/></g></svg>
<div class="a frm" style="left:160px;top:628px;width:160px;height:24px;"></div>
<div class="a" style="left:163px;top:631px;width:154px;height:18px;background:linear-gradient(to right,#808080,#c0c0c0)"></div>
<svg class="a" style="left:165px;top:632px;" width="16" height="16" viewBox="0 0 16 16"><rect x="1" y="0.5" width="13" height="2.5" fill="#5aa0d0"/><rect x="2" y="3" width="11" height="9" fill="#fff"/><path d="M2 4.5h11M2 6.5h11M2 8.5h11M2 10.5h11" stroke="#b0b0b0" stroke-width="1"/><path d="M7 4h3v3h2l-3.5 4.5L5 7h2z" fill="#20a010"/><path d="M12.5 8l3.5 4.5h-2V15h-3v-2.5H9z" fill="#d81e28"/></svg>
<div class="a tb" style="left:182px;top:634px;">LKH2@RTS</div>
<div class="a btn" style="left:265px;top:633px;width:16px;height:14px"></div>
<svg class="a" style="left:265px;top:633px;" width="16" height="14" viewBox="0 0 16 14"><path d="M5 2h6v6H9V7h1V4H6v1H5z M3 5h6v6H3z M4 7v3h4V7z" fill="#000" fill-rule="evenodd" shape-rendering="crispEdges"/></svg>
<div class="a btn" style="left:281px;top:633px;width:16px;height:14px"></div>
<svg class="a" style="left:281px;top:633px;" width="16" height="14" viewBox="0 0 16 14"><path d="M3 2h9v9H3z M4 4v6h7V4z" fill="#000" fill-rule="evenodd" shape-rendering="crispEdges"/></svg>
<div class="a btn" style="left:299px;top:633px;width:16px;height:14px"></div>
<svg class="a" style="left:299px;top:633px;" width="16" height="14" viewBox="0 0 16 14"><g fill="#000" shape-rendering="crispEdges"><rect x="4" y="3" width="1" height="1"/><rect x="5" y="3" width="1" height="1"/><rect x="10" y="3" width="1" height="1"/><rect x="11" y="3" width="1" height="1"/><rect x="5" y="4" width="1" height="1"/><rect x="6" y="4" width="1" height="1"/><rect x="9" y="4" width="1" height="1"/><rect x="10" y="4" width="1" height="1"/><rect x="6" y="5" width="1" height="1"/><rect x="7" y="5" width="1" height="1"/><rect x="8" y="5" width="1" height="1"/><rect x="9" y="5" width="1" height="1"/><rect x="7" y="6" width="1" height="1"/><rect x="8" y="6" width="1" height="1"/><rect x="6" y="7" width="1" height="1"/><rect x="7" y="7" width="1" height="1"/><rect x="8" y="7" width="1" height="1"/><rect x="9" y="7" width="1" height="1"/><rect x="5" y="8" width="1" height="1"/><rect x="6" y="8" width="1" height="1"/><rect x="9" y="8" width="1" height="1"/><rect x="10" y="8" width="1" height="1"/><rect x="4" y="9" width="1" height="1"/><rect x="5" y="9" width="1" height="1"/><rect x="10" y="9" width="1" height="1"/><rect x="11" y="9" width="1" height="1"/></g></svg>
<div class="a frm" style="left:320px;top:628px;width:160px;height:24px;"></div>
<div class="a" style="left:323px;top:631px;width:154px;height:18px;background:linear-gradient(to right,#808080,#c0c0c0)"></div>
<svg class="a" style="left:325px;top:632px;" width="16" height="16" viewBox="0 0 16 16"><rect x="1" y="0.5" width="13" height="2.5" fill="#5aa0d0"/><rect x="2" y="3" width="11" height="9" fill="#fff"/><path d="M2 4.5h11M2 6.5h11M2 8.5h11M2 10.5h11" stroke="#b0b0b0" stroke-width="1"/><path d="M7 4h3v3h2l-3.5 4.5L5 7h2z" fill="#20a010"/><path d="M12.5 8l3.5 4.5h-2V15h-3v-2.5H9z" fill="#d81e28"/></svg>
<div class="a tb" style="left:342px;top:634px;">GMH2@RTS</div>
<div class="a btn" style="left:425px;top:633px;width:16px;height:14px"></div>
<svg class="a" style="left:425px;top:633px;" width="16" height="14" viewBox="0 0 16 14"><path d="M5 2h6v6H9V7h1V4H6v1H5z M3 5h6v6H3z M4 7v3h4V7z" fill="#000" fill-rule="evenodd" shape-rendering="crispEdges"/></svg>
<div class="a btn" style="left:441px;top:633px;width:16px;height:14px"></div>
<svg class="a" style="left:441px;top:633px;" width="16" height="14" viewBox="0 0 16 14"><path d="M3 2h9v9H3z M4 4v6h7V4z" fill="#000" fill-rule="evenodd" shape-rendering="crispEdges"/></svg>
<div class="a btn" style="left:459px;top:633px;width:16px;height:14px"></div>
<svg class="a" style="left:459px;top:633px;" width="16" height="14" viewBox="0 0 16 14"><g fill="#000" shape-rendering="crispEdges"><rect x="4" y="3" width="1" height="1"/><rect x="5" y="3" width="1" height="1"/><rect x="10" y="3" width="1" height="1"/><rect x="11" y="3" width="1" height="1"/><rect x="5" y="4" width="1" height="1"/><rect x="6" y="4" width="1" height="1"/><rect x="9" y="4" width="1" height="1"/><rect x="10" y="4" width="1" height="1"/><rect x="6" y="5" width="1" height="1"/><rect x="7" y="5" width="1" height="1"/><rect x="8" y="5" width="1" height="1"/><rect x="9" y="5" width="1" height="1"/><rect x="7" y="6" width="1" height="1"/><rect x="8" y="6" width="1" height="1"/><rect x="6" y="7" width="1" height="1"/><rect x="7" y="7" width="1" height="1"/><rect x="8" y="7" width="1" height="1"/><rect x="9" y="7" width="1" height="1"/><rect x="5" y="8" width="1" height="1"/><rect x="6" y="8" width="1" height="1"/><rect x="9" y="8" width="1" height="1"/><rect x="10" y="8" width="1" height="1"/><rect x="4" y="9" width="1" height="1"/><rect x="5" y="9" width="1" height="1"/><rect x="10" y="9" width="1" height="1"/><rect x="11" y="9" width="1" height="1"/></g></svg>
<div class="a frm" style="left:0px;top:652px;width:160px;height:24px;"></div>
<div class="a" style="left:3px;top:655px;width:154px;height:18px;background:linear-gradient(to right,#808080,#c0c0c0)"></div>
<svg class="a" style="left:5px;top:656px;" width="16" height="16" viewBox="0 0 16 16"><rect x="1" y="0.5" width="13" height="2.5" fill="#5aa0d0"/><rect x="2" y="3" width="11" height="9" fill="#fff"/><path d="M2 4.5h11M2 6.5h11M2 8.5h11M2 10.5h11" stroke="#b0b0b0" stroke-width="1"/><path d="M7 4h3v3h2l-3.5 4.5L5 7h2z" fill="#20a010"/><path d="M12.5 8l3.5 4.5h-2V15h-3v-2.5H9z" fill="#d81e28"/></svg>
<div class="a tb" style="left:22px;top:658px;transform:scaleX(0.91);transform-origin:0 0">SBER@EQBR</div>
<div class="a btn" style="left:105px;top:657px;width:16px;height:14px"></div>
<svg class="a" style="left:105px;top:657px;" width="16" height="14" viewBox="0 0 16 14"><path d="M5 2h6v6H9V7h1V4H6v1H5z M3 5h6v6H3z M4 7v3h4V7z" fill="#000" fill-rule="evenodd" shape-rendering="crispEdges"/></svg>
<div class="a btn" style="left:121px;top:657px;width:16px;height:14px"></div>
<svg class="a" style="left:121px;top:657px;" width="16" height="14" viewBox="0 0 16 14"><path d="M3 2h9v9H3z M4 4v6h7V4z" fill="#000" fill-rule="evenodd" shape-rendering="crispEdges"/></svg>
<div class="a btn" style="left:139px;top:657px;width:16px;height:14px"></div>
<svg class="a" style="left:139px;top:657px;" width="16" height="14" viewBox="0 0 16 14"><g fill="#000" shape-rendering="crispEdges"><rect x="4" y="3" width="1" height="1"/><rect x="5" y="3" width="1" height="1"/><rect x="10" y="3" width="1" height="1"/><rect x="11" y="3" width="1" height="1"/><rect x="5" y="4" width="1" height="1"/><rect x="6" y="4" width="1" height="1"/><rect x="9" y="4" width="1" height="1"/><rect x="10" y="4" width="1" height="1"/><rect x="6" y="5" width="1" height="1"/><rect x="7" y="5" width="1" height="1"/><rect x="8" y="5" width="1" height="1"/><rect x="9" y="5" width="1" height="1"/><rect x="7" y="6" width="1" height="1"/><rect x="8" y="6" width="1" height="1"/><rect x="6" y="7" width="1" height="1"/><rect x="7" y="7" width="1" height="1"/><rect x="8" y="7" width="1" height="1"/><rect x="9" y="7" width="1" height="1"/><rect x="5" y="8" width="1" height="1"/><rect x="6" y="8" width="1" height="1"/><rect x="9" y="8" width="1" height="1"/><rect x="10" y="8" width="1" height="1"/><rect x="4" y="9" width="1" height="1"/><rect x="5" y="9" width="1" height="1"/><rect x="10" y="9" width="1" height="1"/><rect x="11" y="9" width="1" height="1"/></g></svg>
<div class="a frm" style="left:0px;top:676px;width:160px;height:24px;"></div>
<div class="a" style="left:3px;top:679px;width:154px;height:18px;background:linear-gradient(to right,#808080,#c0c0c0)"></div>
<svg class="a" style="left:5px;top:680px;" width="16" height="16" viewBox="0 0 16 16"><rect x="1" y="0.5" width="13" height="2.5" fill="#5aa0d0"/><rect x="2" y="3" width="11" height="9" fill="#fff"/><path d="M2 4.5h11M2 6.5h11M2 8.5h11M2 10.5h11" stroke="#b0b0b0" stroke-width="1"/><path d="M7 4h3v3h2l-3.5 4.5L5 7h2z" fill="#20a010"/><path d="M12.5 8l3.5 4.5h-2V15h-3v-2.5H9z" fill="#d81e28"/></svg>
<div class="a tb" style="left:22px;top:682px;">GZZ1@RTS</div>
<div class="a btn" style="left:105px;top:681px;width:16px;height:14px"></div>
<svg class="a" style="left:105px;top:681px;" width="16" height="14" viewBox="0 0 16 14"><path d="M5 2h6v6H9V7h1V4H6v1H5z M3 5h6v6H3z M4 7v3h4V7z" fill="#000" fill-rule="evenodd" shape-rendering="crispEdges"/></svg>
<div class="a btn" style="left:121px;top:681px;width:16px;height:14px"></div>
<svg class="a" style="left:121px;top:681px;" width="16" height="14" viewBox="0 0 16 14"><path d="M3 2h9v9H3z M4 4v6h7V4z" fill="#000" fill-rule="evenodd" shape-rendering="crispEdges"/></svg>
<div class="a btn" style="left:139px;top:681px;width:16px;height:14px"></div>
<svg class="a" style="left:139px;top:681px;" width="16" height="14" viewBox="0 0 16 14"><g fill="#000" shape-rendering="crispEdges"><rect x="4" y="3" width="1" height="1"/><rect x="5" y="3" width="1" height="1"/><rect x="10" y="3" width="1" height="1"/><rect x="11" y="3" width="1" height="1"/><rect x="5" y="4" width="1" height="1"/><rect x="6" y="4" width="1" height="1"/><rect x="9" y="4" width="1" height="1"/><rect x="10" y="4" width="1" height="1"/><rect x="6" y="5" width="1" height="1"/><rect x="7" y="5" width="1" height="1"/><rect x="8" y="5" width="1" height="1"/><rect x="9" y="5" width="1" height="1"/><rect x="7" y="6" width="1" height="1"/><rect x="8" y="6" width="1" height="1"/><rect x="6" y="7" width="1" height="1"/><rect x="7" y="7" width="1" height="1"/><rect x="8" y="7" width="1" height="1"/><rect x="9" y="7" width="1" height="1"/><rect x="5" y="8" width="1" height="1"/><rect x="6" y="8" width="1" height="1"/><rect x="9" y="8" width="1" height="1"/><rect x="10" y="8" width="1" height="1"/><rect x="4" y="9" width="1" height="1"/><rect x="5" y="9" width="1" height="1"/><rect x="10" y="9" width="1" height="1"/><rect x="11" y="9" width="1" height="1"/></g></svg>
<div class="a frm" style="left:480px;top:676px;width:160px;height:24px;"></div>
<div class="a" style="left:483px;top:679px;width:154px;height:18px;background:linear-gradient(to right,#808080,#c0c0c0)"></div>
<svg class="a" style="left:485px;top:680px;" width="16" height="16" viewBox="0 0 16 16"><rect x="1" y="0.5" width="13" height="2.5" fill="#5aa0d0"/><rect x="2" y="3" width="11" height="9" fill="#fff"/><path d="M2 4.5h11M2 6.5h11M2 8.5h11M2 10.5h11" stroke="#b0b0b0" stroke-width="1"/><path d="M7 4h3v3h2l-3.5 4.5L5 7h2z" fill="#20a010"/><path d="M12.5 8l3.5 4.5h-2V15h-3v-2.5H9z" fill="#d81e28"/></svg>
<div class="a tb" style="left:502px;top:682px;">SiH2@RTS</div>
<div class="a btn" style="left:585px;top:681px;width:16px;height:14px"></div>
<svg class="a" style="left:585px;top:681px;" width="16" height="14" viewBox="0 0 16 14"><path d="M5 2h6v6H9V7h1V4H6v1H5z M3 5h6v6H3z M4 7v3h4V7z" fill="#000" fill-rule="evenodd" shape-rendering="crispEdges"/></svg>
<div class="a btn" style="left:601px;top:681px;width:16px;height:14px"></div>
<svg class="a" style="left:601px;top:681px;" width="16" height="14" viewBox="0 0 16 14"><path d="M3 2h9v9H3z M4 4v6h7V4z" fill="#000" fill-rule="evenodd" shape-rendering="crispEdges"/></svg>
<div class="a btn" style="left:619px;top:681px;width:16px;height:14px"></div>
<svg class="a" style="left:619px;top:681px;" width="16" height="14" viewBox="0 0 16 14"><g fill="#000" shape-rendering="crispEdges"><rect x="4" y="3" width="1" height="1"/><rect x="5" y="3" width="1" height="1"/><rect x="10" y="3" width="1" height="1"/><rect x="11" y="3" width="1" height="1"/><rect x="5" y="4" width="1" height="1"/><rect x="6" y="4" width="1" height="1"/><rect x="9" y="4" width="1" height="1"/><rect x="10" y="4" width="1" height="1"/><rect x="6" y="5" width="1" height="1"/><rect x="7" y="5" width="1" height="1"/><rect x="8" y="5" width="1" height="1"/><rect x="9" y="5" width="1" height="1"/><rect x="7" y="6" width="1" height="1"/><rect x="8" y="6" width="1" height="1"/><rect x="6" y="7" width="1" height="1"/><rect x="7" y="7" width="1" height="1"/><rect x="8" y="7" width="1" height="1"/><rect x="9" y="7" width="1" height="1"/><rect x="5" y="8" width="1" height="1"/><rect x="6" y="8" width="1" height="1"/><rect x="9" y="8" width="1" height="1"/><rect x="10" y="8" width="1" height="1"/><rect x="4" y="9" width="1" height="1"/><rect x="5" y="9" width="1" height="1"/><rect x="10" y="9" width="1" height="1"/><rect x="11" y="9" width="1" height="1"/></g></svg>
<div class="a frm" style="left:640px;top:676px;width:160px;height:24px;"></div>
<div class="a" style="left:643px;top:679px;width:154px;height:18px;background:linear-gradient(to right,#808080,#c0c0c0)"></div>
<svg class="a" style="left:645px;top:680px;" width="16" height="16" viewBox="0 0 16 16"><rect x="1" y="0.5" width="13" height="2.5" fill="#5aa0d0"/><rect x="2" y="3" width="11" height="9" fill="#fff"/><path d="M2 4.5h11M2 6.5h11M2 8.5h11M2 10.5h11" stroke="#b0b0b0" stroke-width="1"/><path d="M7 4h3v3h2l-3.5 4.5L5 7h2z" fill="#20a010"/><path d="M12.5 8l3.5 4.5h-2V15h-3v-2.5H9z" fill="#d81e28"/></svg>
<div class="a tb" style="left:662px;top:682px;">GMZ1@RTS</div>
<div class="a btn" style="left:745px;top:681px;width:16px;height:14px"></div>
<svg class="a" style="left:745px;top:681px;" width="16" height="14" viewBox="0 0 16 14"><path d="M5 2h6v6H9V7h1V4H6v1H5z M3 5h6v6H3z M4 7v3h4V7z" fill="#000" fill-rule="evenodd" shape-rendering="crispEdges"/></svg>
<div class="a btn" style="left:761px;top:681px;width:16px;height:14px"></div>
<svg class="a" style="left:761px;top:681px;" width="16" height="14" viewBox="0 0 16 14"><path d="M3 2h9v9H3z M4 4v6h7V4z" fill="#000" fill-rule="evenodd" shape-rendering="crispEdges"/></svg>
<div class="a btn" style="left:779px;top:681px;width:16px;height:14px"></div>
<svg class="a" style="left:779px;top:681px;" width="16" height="14" viewBox="0 0 16 14"><g fill="#000" shape-rendering="crispEdges"><rect x="4" y="3" width="1" height="1"/><rect x="5" y="3" width="1" height="1"/><rect x="10" y="3" width="1" height="1"/><rect x="11" y="3" width="1" height="1"/><rect x="5" y="4" width="1" height="1"/><rect x="6" y="4" width="1" height="1"/><rect x="9" y="4" width="1" height="1"/><rect x="10" y="4" width="1" height="1"/><rect x="6" y="5" width="1" height="1"/><rect x="7" y="5" width="1" height="1"/><rect x="8" y="5" width="1" height="1"/><rect x="9" y="5" width="1" height="1"/><rect x="7" y="6" width="1" height="1"/><rect x="8" y="6" width="1" height="1"/><rect x="6" y="7" width="1" height="1"/><rect x="7" y="7" width="1" height="1"/><rect x="8" y="7" width="1" height="1"/><rect x="9" y="7" width="1" height="1"/><rect x="5" y="8" width="1" height="1"/><rect x="6" y="8" width="1" height="1"/><rect x="9" y="8" width="1" height="1"/><rect x="10" y="8" width="1" height="1"/><rect x="4" y="9" width="1" height="1"/><rect x="5" y="9" width="1" height="1"/><rect x="10" y="9" width="1" height="1"/><rect x="11" y="9" width="1" height="1"/></g></svg>
<div class="a frm" style="left:800px;top:676px;width:160px;height:24px;"></div>
<div class="a" style="left:803px;top:679px;width:154px;height:18px;background:linear-gradient(to right,#808080,#c0c0c0)"></div>
<svg class="a" style="left:805px;top:680px;" width="16" height="16" viewBox="0 0 16 16"><rect x="1" y="0.5" width="13" height="2.5" fill="#5aa0d0"/><rect x="2" y="3" width="11" height="9" fill="#fff"/><path d="M2 4.5h11M2 6.5h11M2 8.5h11M2 10.5h11" stroke="#b0b0b0" stroke-width="1"/><path d="M7 4h3v3h2l-3.5 4.5L5 7h2z" fill="#20a010"/><path d="M12.5 8l3.5 4.5h-2V15h-3v-2.5H9z" fill="#d81e28"/></svg>
<div class="a tb" style="left:822px;top:682px;">SiZ1@RTS</div>
<div class="a btn" style="left:905px;top:681px;width:16px;height:14px"></div>
<svg class="a" style="left:905px;top:681px;" width="16" height="14" viewBox="0 0 16 14"><path d="M5 2h6v6H9V7h1V4H6v1H5z M3 5h6v6H3z M4 7v3h4V7z" fill="#000" fill-rule="evenodd" shape-rendering="crispEdges"/></svg>
<div class="a btn" style="left:921px;top:681px;width:16px;height:14px"></div>
<svg class="a" style="left:921px;top:681px;" width="16" height="14" viewBox="0 0 16 14"><path d="M3 2h9v9H3z M4 4v6h7V4z" fill="#000" fill-rule="evenodd" shape-rendering="crispEdges"/></svg>
<div class="a btn" style="left:939px;top:681px;width:16px;height:14px"></div>
<svg class="a" style="left:939px;top:681px;" width="16" height="14" viewBox="0 0 16 14"><g fill="#000" shape-rendering="crispEdges"><rect x="4" y="3" width="1" height="1"/><rect x="5" y="3" width="1" height="1"/><rect x="10" y="3" width="1" height="1"/><rect x="11" y="3" width="1" height="1"/><rect x="5" y="4" width="1" height="1"/><rect x="6" y="4" width="1" height="1"/><rect x="9" y="4" width="1" height="1"/><rect x="10" y="4" width="1" height="1"/><rect x="6" y="5" width="1" height="1"/><rect x="7" y="5" width="1" height="1"/><rect x="8" y="5" width="1" height="1"/><rect x="9" y="5" width="1" height="1"/><rect x="7" y="6" width="1" height="1"/><rect x="8" y="6" width="1" height="1"/><rect x="6" y="7" width="1" height="1"/><rect x="7" y="7" width="1" height="1"/><rect x="8" y="7" width="1" height="1"/><rect x="9" y="7" width="1" height="1"/><rect x="5" y="8" width="1" height="1"/><rect x="6" y="8" width="1" height="1"/><rect x="9" y="8" width="1" height="1"/><rect x="10" y="8" width="1" height="1"/><rect x="4" y="9" width="1" height="1"/><rect x="5" y="9" width="1" height="1"/><rect x="10" y="9" width="1" height="1"/><rect x="11" y="9" width="1" height="1"/></g></svg>
<div class="a frm" style="left:960px;top:676px;width:160px;height:24px;"></div>
<div class="a" style="left:963px;top:679px;width:154px;height:18px;background:linear-gradient(to right,#808080,#c0c0c0)"></div>
<svg class="a" style="left:965px;top:680px;" width="16" height="16" viewBox="0 0 16 16"><rect x="1" y="0.5" width="13" height="2.5" fill="#5aa0d0"/><rect x="2" y="3" width="11" height="9" fill="#fff"/><path d="M2 4.5h11M2 6.5h11M2 8.5h11M2 10.5h11" stroke="#b0b0b0" stroke-width="1"/><path d="M7 4h3v3h2l-3.5 4.5L5 7h2z" fill="#20a010"/><path d="M12.5 8l3.5 4.5h-2V15h-3v-2.5H9z" fill="#d81e28"/></svg>
<div class="a tb" style="left:982px;top:682px;transform:scaleX(0.91);transform-origin:0 0">GAZP@EQNE</div>
<div class="a btn" style="left:1065px;top:681px;width:16px;height:14px"></div>
<svg class="a" style="left:1065px;top:681px;" width="16" height="14" viewBox="0 0 16 14"><path d="M5 2h6v6H9V7h1V4H6v1H5z M3 5h6v6H3z M4 7v3h4V7z" fill="#000" fill-rule="evenodd" shape-rendering="crispEdges"/></svg>
<div class="a btn" style="left:1081px;top:681px;width:16px;height:14px"></div>
<svg class="a" style="left:1081px;top:681px;" width="16" height="14" viewBox="0 0 16 14"><path d="M3 2h9v9H3z M4 4v6h7V4z" fill="#000" fill-rule="evenodd" shape-rendering="crispEdges"/></svg>
<div class="a btn" style="left:1099px;top:681px;width:16px;height:14px"></div>
<svg class="a" style="left:1099px;top:681px;" width="16" height="14" viewBox="0 0 16 14"><g fill="#000" shape-rendering="crispEdges"><rect x="4" y="3" width="1" height="1"/><rect x="5" y="3" width="1" height="1"/><rect x="10" y="3" width="1" height="1"/><rect x="11" y="3" width="1" height="1"/><rect x="5" y="4" width="1" height="1"/><rect x="6" y="4" width="1" height="1"/><rect x="9" y="4" width="1" height="1"/><rect x="10" y="4" width="1" height="1"/><rect x="6" y="5" width="1" height="1"/><rect x="7" y="5" width="1" height="1"/><rect x="8" y="5" width="1" height="1"/><rect x="9" y="5" width="1" height="1"/><rect x="7" y="6" width="1" height="1"/><rect x="8" y="6" width="1" height="1"/><rect x="6" y="7" width="1" height="1"/><rect x="7" y="7" width="1" height="1"/><rect x="8" y="7" width="1" height="1"/><rect x="9" y="7" width="1" height="1"/><rect x="5" y="8" width="1" height="1"/><rect x="6" y="8" width="1" height="1"/><rect x="9" y="8" width="1" height="1"/><rect x="10" y="8" width="1" height="1"/><rect x="4" y="9" width="1" height="1"/><rect x="5" y="9" width="1" height="1"/><rect x="10" y="9" width="1" height="1"/><rect x="11" y="9" width="1" height="1"/></g></svg>
<div class="a frm" style="left:0px;top:408px;width:160px;height:24px;"></div>
<div class="a" style="left:3px;top:411px;width:154px;height:18px;background:linear-gradient(to right,#808080,#c0c0c0)"></div>
<svg class="a" style="left:5px;top:412px;" width="16" height="16" viewBox="0 0 16 16"><rect x="1" y="0.5" width="13" height="2.5" fill="#5aa0d0"/><rect x="2" y="3" width="11" height="9" fill="#fff"/><path d="M2 4.5h11M2 6.5h11M2 8.5h11M2 10.5h11" stroke="#b0b0b0" stroke-width="1"/><path d="M7 4h3v3h2l-3.5 4.5L5 7h2z" fill="#20a010"/><path d="M12.5 8l3.5 4.5h-2V15h-3v-2.5H9z" fill="#d81e28"/></svg>
<div class="a tb" style="left:22px;top:414px;">LKZ1@RTS</div>
<div class="a btn" style="left:105px;top:413px;width:16px;height:14px"></div>
<svg class="a" style="left:105px;top:413px;" width="16" height="14" viewBox="0 0 16 14"><path d="M5 2h6v6H9V7h1V4H6v1H5z M3 5h6v6H3z M4 7v3h4V7z" fill="#000" fill-rule="evenodd" shape-rendering="crispEdges"/></svg>
<div class="a btn" style="left:121px;top:413px;width:16px;height:14px"></div>
<svg class="a" style="left:121px;top:413px;" width="16" height="14" viewBox="0 0 16 14"><path d="M3 2h9v9H3z M4 4v6h7V4z" fill="#000" fill-rule="evenodd" shape-rendering="crispEdges"/></svg>
<div class="a btn" style="left:139px;top:413px;width:16px;height:14px"></div>
<svg class="a" style="left:139px;top:413px;" width="16" height="14" viewBox="0 0 16 14"><g fill="#000" shape-rendering="crispEdges"><rect x="4" y="3" width="1" height="1"/><rect x="5" y="3" width="1" height="1"/><rect x="10" y="3" width="1" height="1"/><rect x="11" y="3" width="1" height="1"/><rect x="5" y="4" width="1" height="1"/><rect x="6" y="4" width="1" height="1"/><rect x="9" y="4" width="1" height="1"/><rect x="10" y="4" width="1" height="1"/><rect x="6" y="5" width="1" height="1"/><rect x="7" y="5" width="1" height="1"/><rect x="8" y="5" width="1" height="1"/><rect x="9" y="5" width="1" height="1"/><rect x="7" y="6" width="1" height="1"/><rect x="8" y="6" width="1" height="1"/><rect x="6" y="7" width="1" height="1"/><rect x="7" y="7" width="1" height="1"/><rect x="8" y="7" width="1" height="1"/><rect x="9" y="7" width="1" height="1"/><rect x="5" y="8" width="1" height="1"/><rect x="6" y="8" width="1" height="1"/><rect x="9" y="8" width="1" height="1"/><rect x="10" y="8" width="1" height="1"/><rect x="4" y="9" width="1" height="1"/><rect x="5" y="9" width="1" height="1"/><rect x="10" y="9" width="1" height="1"/><rect x="11" y="9" width="1" height="1"/></g></svg>
<div class="a frm" style="left:0px;top:432px;width:160px;height:24px;"></div>
<div class="a" style="left:3px;top:435px;width:154px;height:18px;background:linear-gradient(to right,#808080,#c0c0c0)"></div>
<svg class="a" style="left:5px;top:436px;" width="16" height="16" viewBox="0 0 16 16"><rect x="1" y="0.5" width="13" height="2.5" fill="#5aa0d0"/><rect x="2" y="3" width="11" height="9" fill="#fff"/><path d="M2 4.5h11M2 6.5h11M2 8.5h11M2 10.5h11" stroke="#b0b0b0" stroke-width="1"/><path d="M7 4h3v3h2l-3.5 4.5L5 7h2z" fill="#20a010"/><path d="M12.5 8l3.5 4.5h-2V15h-3v-2.5H9z" fill="#d81e28"/></svg>
<div class="a tb" style="left:22px;top:438px;">RSZ1@RTS</div>
<div class="a btn" style="left:105px;top:437px;width:16px;height:14px"></div>
<svg class="a" style="left:105px;top:437px;" width="16" height="14" viewBox="0 0 16 14"><path d="M5 2h6v6H9V7h1V4H6v1H5z M3 5h6v6H3z M4 7v3h4V7z" fill="#000" fill-rule="evenodd" shape-rendering="crispEdges"/></svg>
<div class="a btn" style="left:121px;top:437px;width:16px;height:14px"></div>
<svg class="a" style="left:121px;top:437px;" width="16" height="14" viewBox="0 0 16 14"><path d="M3 2h9v9H3z M4 4v6h7V4z" fill="#000" fill-rule="evenodd" shape-rendering="crispEdges"/></svg>
<div class="a btn" style="left:139px;top:437px;width:16px;height:14px"></div>
<svg class="a" style="left:139px;top:437px;" width="16" height="14" viewBox="0 0 16 14"><g fill="#000" shape-rendering="crispEdges"><rect x="4" y="3" width="1" height="1"/><rect x="5" y="3" width="1" height="1"/><rect x="10" y="3" width="1" height="1"/><rect x="11" y="3" width="1" height="1"/><rect x="5" y="4" width="1" height="1"/><rect x="6" y="4" width="1" height="1"/><rect x="9" y="4" width="1" height="1"/><rect x="10" y="4" width="1" height="1"/><rect x="6" y="5" width="1" height="1"/><rect x="7" y="5" width="1" height="1"/><rect x="8" y="5" width="1" height="1"/><rect x="9" y="5" width="1" height="1"/><rect x="7" y="6" width="1" height="1"/><rect x="8" y="6" width="1" height="1"/><rect x="6" y="7" width="1" height="1"/><rect x="7" y="7" width="1" height="1"/><rect x="8" y="7" width="1" height="1"/><rect x="9" y="7" width="1" height="1"/><rect x="5" y="8" width="1" height="1"/><rect x="6" y="8" width="1" height="1"/><rect x="9" y="8" width="1" height="1"/><rect x="10" y="8" width="1" height="1"/><rect x="4" y="9" width="1" height="1"/><rect x="5" y="9" width="1" height="1"/><rect x="10" y="9" width="1" height="1"/><rect x="11" y="9" width="1" height="1"/></g></svg>
<div class="a frm" style="left:28px;top:294px;width:500px;height:120px;"></div>
<div class="a" style="left:32px;top:298px;width:492px;height:18px;background:linear-gradient(to right,#808080,#c0c0c0)"></div>
<svg class="a" style="left:34px;top:299px;" width="16" height="16" viewBox="0 0 16 16"><path d="M0.5 4.5l3-3M12.5 15.5l3-3M0.5 11.5l3 3M12.5 0.5l3 3" stroke="#000"/><rect x="3" y="3" width="10" height="10" fill="#fff"/><path d="M4 5.5h2l1 1 1-1h3M4 8.5h2l1 1 1-1h3M4 11.5h7" stroke="#707070"/></svg>
<div class="a tb" style="left:51px;top:301px;font-size:11.5px">Позиции по деривативам</div>
<div class="a " style="left:32px;top:316px;width:492px;height:94px;background:#d4d0c8"></div>
<div class="a " style="left:58px;top:332px;width:470px;height:78px;background:#fff"></div>
<div class="a vl" style="left:123px;top:332px;width:1px;height:78px;"></div>
<div class="a vl" style="left:189px;top:332px;width:1px;height:78px;"></div>
<div class="a vl" style="left:290px;top:332px;width:1px;height:78px;"></div>
<div class="a vl" style="left:372px;top:332px;width:1px;height:78px;"></div>
<div class="a vl" style="left:452px;top:332px;width:1px;height:78px;"></div>
<div class="a hc" style="left:32px;top:317px;width:25px;height:15px;text-align:left;padding:0px 1px 0;box-sizing:border-box"><span class="sx"></span></div>
<div class="a hc" style="left:58px;top:317px;width:65px;height:15px;text-align:left;padding:0px 1px 0;box-sizing:border-box"><span class="sx">Торговый счет</span></div>
<div class="a hc" style="left:124px;top:317px;width:65px;height:15px;text-align:left;padding:0px 1px 0;box-sizing:border-box"><span class="sx">Код инструмента</span></div>
<div class="a hc" style="left:190px;top:317px;width:100px;height:15px;text-align:center;padding:0px 1px 0;box-sizing:border-box"><span class="sx">Вход. чист. поз.</span></div>
<div class="a hc" style="left:291px;top:317px;width:81px;height:15px;text-align:center;padding:0px 1px 0;box-sizing:border-box"><span class="sx">Тек. чист. поз.</span></div>
<div class="a hc" style="left:373px;top:317px;width:79px;height:15px;text-align:center;padding:0px 1px 0;box-sizing:border-box"><span class="sx">Акт. покупка</span></div>
<div class="a hc" style="left:453px;top:317px;width:79px;height:15px;text-align:center;padding:0px 1px 0;box-sizing:border-box"><span class="sx">Акт. продажа</span></div>
<div class="a frm" style="left:25px;top:458px;width:284px;height:99px;"></div>
<div class="a" style="left:29px;top:462px;width:276px;height:18px;background:linear-gradient(to right,#808080,#c0c0c0)"></div>
<svg class="a" style="left:31px;top:463px;" width="16" height="16" viewBox="0 0 16 16"><path d="M5.5 2.5v-1h4v1" stroke="#404040" fill="none"/><rect x="1.5" y="2.5" width="12" height="10" fill="#e0e0e0" stroke="#404040"/><path d="M2 3h11v2l-3.5 2.5h-4L2 5z" fill="#fafafa"/><path d="M2 5l3.5 2.5h4L13 5" stroke="#404040" fill="none"/><rect x="6.5" y="6.5" width="2" height="2" fill="#fff" stroke="#404040" stroke-width="0.8"/></svg>
<div class="a tb" style="left:48px;top:464px;font-size:11.7px">Портфель по бумагам</div>
<div class="a btn" style="left:254px;top:464px;width:16px;height:14px"></div>
<svg class="a" style="left:254px;top:464px;" width="16" height="14" viewBox="0 0 16 14"><path d="M4 9h6v2H4z" fill="#000" shape-rendering="crispEdges"/></svg>
<div class="a btn" style="left:270px;top:464px;width:16px;height:14px"></div>
<svg class="a" style="left:270px;top:464px;" width="16" height="14" viewBox="0 0 16 14"><path d="M3 2h9v9H3z M4 4v6h7V4z" fill="#000" fill-rule="evenodd" shape-rendering="crispEdges"/></svg>
<div class="a btn" style="left:288px;top:464px;width:16px;height:14px"></div>
<svg class="a" style="left:288px;top:464px;" width="16" height="14" viewBox="0 0 16 14"><g fill="#000" shape-rendering="crispEdges"><rect x="4" y="3" width="1" height="1"/><rect x="5" y="3" width="1" height="1"/><rect x="10" y="3" width="1" height="1"/><rect x="11" y="3" width="1" height="1"/><rect x="5" y="4" width="1" height="1"/><rect x="6" y="4" width="1" height="1"/><rect x="9" y="4" width="1" height="1"/><rect x="10" y="4" width="1" height="1"/><rect x="6" y="5" width="1" height="1"/><rect x="7" y="5" width="1" height="1"/><rect x="8" y="5" width="1" height="1"/><rect x="9" y="5" width="1" height="1"/><rect x="7" y="6" width="1" height="1"/><rect x="8" y="6" width="1" height="1"/><rect x="6" y="7" width="1" height="1"/><rect x="7" y="7" width="1" height="1"/><rect x="8" y="7" width="1" height="1"/><rect x="9" y="7" width="1" height="1"/><rect x="5" y="8" width="1" height="1"/><rect x="6" y="8" width="1" height="1"/><rect x="9" y="8" width="1" height="1"/><rect x="10" y="8" width="1" height="1"/><rect x="4" y="9" width="1" height="1"/><rect x="5" y="9" width="1" height="1"/><rect x="10" y="9" width="1" height="1"/><rect x="11" y="9" width="1" height="1"/></g></svg>
<div class="a " style="left:29px;top:480px;width:276px;height:73px;background:#d4d0c8"></div>
<div class="a " style="left:55px;top:495px;width:250px;height:58px;background:#fff"></div>
<div class="a vl" style="left:107px;top:495px;width:1px;height:58px;"></div>
<div class="a vl" style="left:168px;top:495px;width:1px;height:58px;"></div>
<div class="a vl" style="left:229px;top:495px;width:1px;height:58px;"></div>
<div class="a vl" style="left:290px;top:495px;width:1px;height:58px;"></div>
<div class="a hc" style="left:29px;top:481px;width:25px;height:14px;text-align:left;padding:0px 1px 0;box-sizing:border-box"><span class="sx"></span></div>
<div class="a hc" style="left:55px;top:481px;width:52px;height:14px;text-align:left;padding:0px 1px 0;box-sizing:border-box"><span class="sx">Код клиента</span></div>
<div class="a hc" style="left:108px;top:481px;width:60px;height:14px;text-align:left;padding:0px 1px 0;box-sizing:border-box"><span class="sx">ВходСредства</span></div>
<div class="a hc" style="left:169px;top:481px;width:60px;height:14px;text-align:left;padding:0px 1px 0;box-sizing:border-box"><span class="sx">ТекСредства</span></div>
<div class="a hc" style="left:230px;top:481px;width:60px;height:14px;text-align:center;padding:0px 1px 0;box-sizing:border-box"><span class="sx">Тек.плечо</span></div>
<div class="a hc" style="left:291px;top:481px;width:14px;height:14px;text-align:left;padding:0px 1px 0;box-sizing:border-box"><span class="sx"></span></div>
<div class="a frm" style="left:363px;top:447px;width:160px;height:24px;"></div>
<div class="a" style="left:366px;top:450px;width:154px;height:18px;background:linear-gradient(to right,#808080,#c0c0c0)"></div>
<svg class="a" style="left:368px;top:451px;" width="16" height="16" viewBox="0 0 16 16"><rect x="0.5" y="1.5" width="15" height="13" fill="#fff" stroke="#8a8a8a"/><rect x="1" y="1" width="14" height="2" fill="#4a9fd0"/><path d="M2 7.5l2-1.5 2 1.5 2-1.5 1 1h5" stroke="#c03030" fill="none"/><path d="M1 10.5h14" stroke="#8ab"/><path d="M3.5 14v-3M6.5 14v-2M9.5 14v-3M12.5 14v-2" stroke="#2060c0"/></svg>
<div class="a tb" style="left:385px;top:453px;font-size:11.5px">ЛУКОЙЛ Гра...</div>
<div class="a btn" style="left:468px;top:452px;width:16px;height:14px"></div>
<svg class="a" style="left:468px;top:452px;" width="16" height="14" viewBox="0 0 16 14"><path d="M5 2h6v6H9V7h1V4H6v1H5z M3 5h6v6H3z M4 7v3h4V7z" fill="#000" fill-rule="evenodd" shape-rendering="crispEdges"/></svg>
<div class="a btn" style="left:484px;top:452px;width:16px;height:14px"></div>
<svg class="a" style="left:484px;top:452px;" width="16" height="14" viewBox="0 0 16 14"><path d="M3 2h9v9H3z M4 4v6h7V4z" fill="#000" fill-rule="evenodd" shape-rendering="crispEdges"/></svg>
<div class="a btn" style="left:502px;top:452px;width:16px;height:14px"></div>
<svg class="a" style="left:502px;top:452px;" width="16" height="14" viewBox="0 0 16 14"><g fill="#000" shape-rendering="crispEdges"><rect x="4" y="3" width="1" height="1"/><rect x="5" y="3" width="1" height="1"/><rect x="10" y="3" width="1" height="1"/><rect x="11" y="3" width="1" height="1"/><rect x="5" y="4" width="1" height="1"/><rect x="6" y="4" width="1" height="1"/><rect x="9" y="4" width="1" height="1"/><rect x="10" y="4" width="1" height="1"/><rect x="6" y="5" width="1" height="1"/><rect x="7" y="5" width="1" height="1"/><rect x="8" y="5" width="1" height="1"/><rect x="9" y="5" width="1" height="1"/><rect x="7" y="6" width="1" height="1"/><rect x="8" y="6" width="1" height="1"/><rect x="6" y="7" width="1" height="1"/><rect x="7" y="7" width="1" height="1"/><rect x="8" y="7" width="1" height="1"/><rect x="9" y="7" width="1" height="1"/><rect x="5" y="8" width="1" height="1"/><rect x="6" y="8" width="1" height="1"/><rect x="9" y="8" width="1" height="1"/><rect x="10" y="8" width="1" height="1"/><rect x="4" y="9" width="1" height="1"/><rect x="5" y="9" width="1" height="1"/><rect x="10" y="9" width="1" height="1"/><rect x="11" y="9" width="1" height="1"/></g></svg>
<div class="a frm" style="left:370px;top:483px;width:160px;height:24px;"></div>
<div class="a" style="left:373px;top:486px;width:154px;height:18px;background:linear-gradient(to right,#808080,#c0c0c0)"></div>
<svg class="a" style="left:375px;top:487px;" width="16" height="16" viewBox="0 0 16 16"><rect x="0.5" y="1.5" width="15" height="13" fill="#fff" stroke="#8a8a8a"/><rect x="1" y="1" width="14" height="2" fill="#4a9fd0"/><path d="M2 7.5l2-1.5 2 1.5 2-1.5 1 1h5" stroke="#c03030" fill="none"/><path d="M1 10.5h14" stroke="#8ab"/><path d="M3.5 14v-3M6.5 14v-2M9.5 14v-3M12.5 14v-2" stroke="#2060c0"/></svg>
<div class="a tb" style="left:392px;top:489px;font-size:11.5px">Сбербанк...</div>
<div class="a btn" style="left:475px;top:488px;width:16px;height:14px"></div>
<svg class="a" style="left:475px;top:488px;" width="16" height="14" viewBox="0 0 16 14"><path d="M5 2h6v6H9V7h1V4H6v1H5z M3 5h6v6H3z M4 7v3h4V7z" fill="#000" fill-rule="evenodd" shape-rendering="crispEdges"/></svg>
<div class="a btn" style="left:491px;top:488px;width:16px;height:14px"></div>
<svg class="a" style="left:491px;top:488px;" width="16" height="14" viewBox="0 0 16 14"><path d="M3 2h9v9H3z M4 4v6h7V4z" fill="#000" fill-rule="evenodd" shape-rendering="crispEdges"/></svg>
<div class="a btn" style="left:509px;top:488px;width:16px;height:14px"></div>
<svg class="a" style="left:509px;top:488px;" width="16" height="14" viewBox="0 0 16 14"><g fill="#000" shape-rendering="crispEdges"><rect x="4" y="3" width="1" height="1"/><rect x="5" y="3" width="1" height="1"/><rect x="10" y="3" width="1" height="1"/><rect x="11" y="3" width="1" height="1"/><rect x="5" y="4" width="1" height="1"/><rect x="6" y="4" width="1" height="1"/><rect x="9" y="4" width="1" height="1"/><rect x="10" y="4" width="1" height="1"/><rect x="6" y="5" width="1" height="1"/><rect x="7" y="5" width="1" height="1"/><rect x="8" y="5" width="1" height="1"/><rect x="9" y="5" width="1" height="1"/><rect x="7" y="6" width="1" height="1"/><rect x="8" y="6" width="1" height="1"/><rect x="6" y="7" width="1" height="1"/><rect x="7" y="7" width="1" height="1"/><rect x="8" y="7" width="1" height="1"/><rect x="9" y="7" width="1" height="1"/><rect x="5" y="8" width="1" height="1"/><rect x="6" y="8" width="1" height="1"/><rect x="9" y="8" width="1" height="1"/><rect x="10" y="8" width="1" height="1"/><rect x="4" y="9" width="1" height="1"/><rect x="5" y="9" width="1" height="1"/><rect x="10" y="9" width="1" height="1"/><rect x="11" y="9" width="1" height="1"/></g></svg>
<div class="a frm" style="left:433px;top:491px;width:160px;height:24px;"></div>
<div class="a" style="left:436px;top:494px;width:154px;height:18px;background:linear-gradient(to right,#808080,#c0c0c0)"></div>
<svg class="a" style="left:438px;top:495px;" width="16" height="16" viewBox="0 0 16 16"><rect x="1" y="1" width="11" height="3" fill="#4a9fd0"/><rect x="1" y="4" width="11" height="9" fill="#fff"/><path d="M1 6.5h11M1 8.5h11M1 10.5h11" stroke="#b8b8b8"/><rect x="6.5" y="8.5" width="8" height="6" fill="#d8d8d8" stroke="#404040"/><path d="M7 10.5h7" stroke="#404040"/></svg>
<div class="a tb" style="left:455px;top:497px;font-size:11.5px">Позиции по ...</div>
<div class="a btn" style="left:538px;top:496px;width:16px;height:14px"></div>
<svg class="a" style="left:538px;top:496px;" width="16" height="14" viewBox="0 0 16 14"><path d="M5 2h6v6H9V7h1V4H6v1H5z M3 5h6v6H3z M4 7v3h4V7z" fill="#000" fill-rule="evenodd" shape-rendering="crispEdges"/></svg>
<div class="a btn" style="left:554px;top:496px;width:16px;height:14px"></div>
<svg class="a" style="left:554px;top:496px;" width="16" height="14" viewBox="0 0 16 14"><path d="M3 2h9v9H3z M4 4v6h7V4z" fill="#000" fill-rule="evenodd" shape-rendering="crispEdges"/></svg>
<div class="a btn" style="left:572px;top:496px;width:16px;height:14px"></div>
<svg class="a" style="left:572px;top:496px;" width="16" height="14" viewBox="0 0 16 14"><g fill="#000" shape-rendering="crispEdges"><rect x="4" y="3" width="1" height="1"/><rect x="5" y="3" width="1" height="1"/><rect x="10" y="3" width="1" height="1"/><rect x="11" y="3" width="1" height="1"/><rect x="5" y="4" width="1" height="1"/><rect x="6" y="4" width="1" height="1"/><rect x="9" y="4" width="1" height="1"/><rect x="10" y="4" width="1" height="1"/><rect x="6" y="5" width="1" height="1"/><rect x="7" y="5" width="1" height="1"/><rect x="8" y="5" width="1" height="1"/><rect x="9" y="5" width="1" height="1"/><rect x="7" y="6" width="1" height="1"/><rect x="8" y="6" width="1" height="1"/><rect x="6" y="7" width="1" height="1"/><rect x="7" y="7" width="1" height="1"/><rect x="8" y="7" width="1" height="1"/><rect x="9" y="7" width="1" height="1"/><rect x="5" y="8" width="1" height="1"/><rect x="6" y="8" width="1" height="1"/><rect x="9" y="8" width="1" height="1"/><rect x="10" y="8" width="1" height="1"/><rect x="4" y="9" width="1" height="1"/><rect x="5" y="9" width="1" height="1"/><rect x="10" y="9" width="1" height="1"/><rect x="11" y="9" width="1" height="1"/></g></svg>
<div class="a frm" style="left:372px;top:519px;width:160px;height:24px;"></div>
<div class="a" style="left:375px;top:522px;width:154px;height:18px;background:linear-gradient(to right,#808080,#c0c0c0)"></div>
<svg class="a" style="left:377px;top:523px;" width="16" height="16" viewBox="0 0 16 16"><rect x="0.5" y="1.5" width="15" height="13" fill="#fff" stroke="#8a8a8a"/><rect x="1" y="1" width="14" height="2" fill="#4a9fd0"/><path d="M2 7.5l2-1.5 2 1.5 2-1.5 1 1h5" stroke="#c03030" fill="none"/><path d="M1 10.5h14" stroke="#8ab"/><path d="M3.5 14v-3M6.5 14v-2M9.5 14v-3M12.5 14v-2" stroke="#2060c0"/></svg>
<div class="a tb" style="left:394px;top:525px;font-size:11.5px">RTS-9.11 Гр...</div>
<div class="a btn" style="left:477px;top:524px;width:16px;height:14px"></div>
<svg class="a" style="left:477px;top:524px;" width="16" height="14" viewBox="0 0 16 14"><path d="M5 2h6v6H9V7h1V4H6v1H5z M3 5h6v6H3z M4 7v3h4V7z" fill="#000" fill-rule="evenodd" shape-rendering="crispEdges"/></svg>
<div class="a btn" style="left:493px;top:524px;width:16px;height:14px"></div>
<svg class="a" style="left:493px;top:524px;" width="16" height="14" viewBox="0 0 16 14"><path d="M3 2h9v9H3z M4 4v6h7V4z" fill="#000" fill-rule="evenodd" shape-rendering="crispEdges"/></svg>
<div class="a btn" style="left:511px;top:524px;width:16px;height:14px"></div>
<svg class="a" style="left:511px;top:524px;" width="16" height="14" viewBox="0 0 16 14"><g fill="#000" shape-rendering="crispEdges"><rect x="4" y="3" width="1" height="1"/><rect x="5" y="3" width="1" height="1"/><rect x="10" y="3" width="1" height="1"/><rect x="11" y="3" width="1" height="1"/><rect x="5" y="4" width="1" height="1"/><rect x="6" y="4" width="1" height="1"/><rect x="9" y="4" width="1" height="1"/><rect x="10" y="4" width="1" height="1"/><rect x="6" y="5" width="1" height="1"/><rect x="7" y="5" width="1" height="1"/><rect x="8" y="5" width="1" height="1"/><rect x="9" y="5" width="1" height="1"/><rect x="7" y="6" width="1" height="1"/><rect x="8" y="6" width="1" height="1"/><rect x="6" y="7" width="1" height="1"/><rect x="7" y="7" width="1" height="1"/><rect x="8" y="7" width="1" height="1"/><rect x="9" y="7" width="1" height="1"/><rect x="5" y="8" width="1" height="1"/><rect x="6" y="8" width="1" height="1"/><rect x="9" y="8" width="1" height="1"/><rect x="10" y="8" width="1" height="1"/><rect x="4" y="9" width="1" height="1"/><rect x="5" y="9" width="1" height="1"/><rect x="10" y="9" width="1" height="1"/><rect x="11" y="9" width="1" height="1"/></g></svg>
<div class="a frm" style="left:118px;top:252px;width:160px;height:24px;"></div>
<div class="a" style="left:121px;top:255px;width:154px;height:18px;background:linear-gradient(to right,#808080,#c0c0c0)"></div>
<svg class="a" style="left:123px;top:256px;" width="16" height="16" viewBox="0 0 16 16"><rect x="1" y="1" width="14" height="2" fill="#4a9fd0"/><rect x="1" y="3" width="14" height="11" fill="#fff"/><path d="M1 5.5h14M1 8.5h14" stroke="#bbb"/><path d="M0 9.5h3l2-2 3 1 3-1 2 2h3M0 15.5h3l2-2h6l2 2h3" stroke="#000" fill="none"/><path d="M3 10l3 4h4l3-4-3-1-3 1z" stroke="#000" fill="#fff"/></svg>
<div class="a tb" style="left:140px;top:258px;font-size:11.5px">Все сделки</div>
<div class="a btn" style="left:223px;top:257px;width:16px;height:14px"></div>
<svg class="a" style="left:223px;top:257px;" width="16" height="14" viewBox="0 0 16 14"><path d="M5 2h6v6H9V7h1V4H6v1H5z M3 5h6v6H3z M4 7v3h4V7z" fill="#000" fill-rule="evenodd" shape-rendering="crispEdges"/></svg>
<div class="a btn" style="left:239px;top:257px;width:16px;height:14px"></div>
<svg class="a" style="left:239px;top:257px;" width="16" height="14" viewBox="0 0 16 14"><path d="M3 2h9v9H3z M4 4v6h7V4z" fill="#000" fill-rule="evenodd" shape-rendering="crispEdges"/></svg>
<div class="a btn" style="left:257px;top:257px;width:16px;height:14px"></div>
<svg class="a" style="left:257px;top:257px;" width="16" height="14" viewBox="0 0 16 14"><g fill="#000" shape-rendering="crispEdges"><rect x="4" y="3" width="1" height="1"/><rect x="5" y="3" width="1" height="1"/><rect x="10" y="3" width="1" height="1"/><rect x="11" y="3" width="1" height="1"/><rect x="5" y="4" width="1" height="1"/><rect x="6" y="4" width="1" height="1"/><rect x="9" y="4" width="1" height="1"/><rect x="10" y="4" width="1" height="1"/><rect x="6" y="5" width="1" height="1"/><rect x="7" y="5" width="1" height="1"/><rect x="8" y="5" width="1" height="1"/><rect x="9" y="5" width="1" height="1"/><rect x="7" y="6" width="1" height="1"/><rect x="8" y="6" width="1" height="1"/><rect x="6" y="7" width="1" height="1"/><rect x="7" y="7" width="1" height="1"/><rect x="8" y="7" width="1" height="1"/><rect x="9" y="7" width="1" height="1"/><rect x="5" y="8" width="1" height="1"/><rect x="6" y="8" width="1" height="1"/><rect x="9" y="8" width="1" height="1"/><rect x="10" y="8" width="1" height="1"/><rect x="4" y="9" width="1" height="1"/><rect x="5" y="9" width="1" height="1"/><rect x="10" y="9" width="1" height="1"/><rect x="11" y="9" width="1" height="1"/></g></svg>
<div class="a" style="left:494px;top:253px;width:291px;height:166px;background:#d4d0c8;box-sizing:border-box;border:1px solid;border-color:#d4d0c8 #404040 #404040 #d4d0c8;box-shadow:inset 1px 1px #fff,inset -1px -1px #808080"></div>
<div class="a" style="left:497px;top:256px;width:285px;height:18px;background:linear-gradient(to right,#0a246a,#a6caf0)"></div>
<div class="a tb" style="left:499px;top:258px;color:#fff;font-size:11.8px">Установка сетевого соединения (SSL-PRO)</div>
<div class="a btn" style="left:764px;top:258px;width:16px;height:14px"></div>
<svg class="a" style="left:764px;top:258px;" width="16" height="14" viewBox="0 0 16 14"><g fill="#000" shape-rendering="crispEdges"><rect x="4" y="3" width="1" height="1"/><rect x="5" y="3" width="1" height="1"/><rect x="10" y="3" width="1" height="1"/><rect x="11" y="3" width="1" height="1"/><rect x="5" y="4" width="1" height="1"/><rect x="6" y="4" width="1" height="1"/><rect x="9" y="4" width="1" height="1"/><rect x="10" y="4" width="1" height="1"/><rect x="6" y="5" width="1" height="1"/><rect x="7" y="5" width="1" height="1"/><rect x="8" y="5" width="1" height="1"/><rect x="9" y="5" width="1" height="1"/><rect x="7" y="6" width="1" height="1"/><rect x="8" y="6" width="1" height="1"/><rect x="6" y="7" width="1" height="1"/><rect x="7" y="7" width="1" height="1"/><rect x="8" y="7" width="1" height="1"/><rect x="9" y="7" width="1" height="1"/><rect x="5" y="8" width="1" height="1"/><rect x="6" y="8" width="1" height="1"/><rect x="9" y="8" width="1" height="1"/><rect x="10" y="8" width="1" height="1"/><rect x="4" y="9" width="1" height="1"/><rect x="5" y="9" width="1" height="1"/><rect x="10" y="9" width="1" height="1"/><rect x="11" y="9" width="1" height="1"/></g></svg>
<div class="a sunk" style="left:502px;top:280px;width:278px;height:21px;background:#fff"></div>
<div class="a " style="left:505px;top:283px;width:256px;height:15px;background:#0a246a"></div>
<div class="a t" style="left:507px;top:284px;color:#fff">Основной [91.209.122.73:15100]</div>
<div class="a pbtn" style="left:762px;top:282px;width:16px;height:17px;"></div>
<svg class="a" style="left:762px;top:283px;" width="16" height="15" viewBox="0 0 16 15"><path d="M4 6h7l-3.5 4z" fill="#000"/></svg>
<div class="a " style="left:502px;top:306px;width:277px;height:59px;box-sizing:border-box;border:1px solid;border-color:#808080 #fff #fff #808080;box-shadow:inset 1px 1px #fff,inset -1px -1px #808080"></div>
<div class="a t" style="left:510px;top:314px;">Использовать настройки из файла:</div>
<div class="a sunk" style="left:508px;top:334px;width:212px;height:22px;background:#fff"></div>
<div class="a t" style="left:511px;top:338px;">C:\Program Files\QUIK\SSLPro_Pr.ini</div>
<div class="a pbtn" style="left:721px;top:332px;width:26px;height:25px;"></div>
<div class="a t" style="left:728px;top:340px;">...</div>
<div class="a pbtn" style="left:747px;top:332px;width:27px;height:25px;"></div>
<svg class="a" style="left:753px;top:337px;" width="17" height="16" viewBox="0 0 17 16"><rect x="1.5" y="2.5" width="11" height="12" fill="#d8d8d8" stroke="#5a6a7a"/><rect x="1" y="2" width="12" height="3" fill="#3a80c8"/><rect x="5" y="7" width="6" height="6" fill="#fff" stroke="#8a8a8a" stroke-width="0.6"/><path d="M3 8h1M3 10h1M3 12h1" stroke="#707070"/><path d="M9 3h6" stroke="#404040" stroke-width="2"/><rect x="11" y="4" width="3" height="11" fill="#e88a20" stroke="#a05010" stroke-width="0.6"/></svg>
<div class="a " style="left:502px;top:379px;width:65px;height:24px;box-sizing:border-box;border:1px solid #000;background:#d4d0c8;box-shadow:inset 1px 1px #fff,inset -1px -1px #404040,inset -2px -2px #808080"></div>
<div class="a t" style="left:522px;top:384px;">Ввод</div>
<div class="a pbtn" style="left:578px;top:379px;width:65px;height:24px;"></div>
<div class="a t" style="left:591px;top:384px;">Отмена</div>
<div class="a pbtn" style="left:715px;top:379px;width:65px;height:24px;"></div>
<div class="a t" style="left:726px;top:384px;">Справка</div>
</div>
<div class="a dith" style="left:1264px;top:64px;width:16px;height:700px;"></div>
<div class="a pbtn" style="left:1264px;top:64px;width:16px;height:16px"></div>
<svg class="a" style="left:1264px;top:64px" width="16" height="16" viewBox="0 0 16 16"><path d="M4 10h7l-3.5-4z" fill="#000"/></svg>
<div class="a pbtn" style="left:1264px;top:252px;width:16px;height:495px"></div>
<div class="a pbtn" style="left:1264px;top:747px;width:16px;height:16px"></div>
<svg class="a" style="left:1264px;top:747px" width="16" height="16" viewBox="0 0 16 16"><path d="M4 6h7l-3.5 4z" fill="#000"/></svg>
<div class="a dith" style="left:0px;top:764px;width:1264px;height:16px;"></div>
<div class="a pbtn" style="left:0px;top:764px;width:16px;height:16px"></div>
<svg class="a" style="left:0px;top:764px" width="16" height="16" viewBox="0 0 16 16"><path d="M10 4v7l-4-3.5z" fill="#000"/></svg>
<div class="a pbtn" style="left:16px;top:764px;width:861px;height:16px"></div>
<div class="a pbtn" style="left:1248px;top:764px;width:16px;height:16px"></div>
<svg class="a" style="left:1248px;top:764px" width="16" height="16" viewBox="0 0 16 16"><path d="M6 4v7l4-3.5z" fill="#000"/></svg>
<div class="a " style="left:1264px;top:764px;width:16px;height:16px;background:#d4d0c8"></div>
<div class="a " style="left:0px;top:780px;width:1280px;height:20px;background:#d4d0c8"></div>
<div class="a " style="left:0px;top:782px;width:927px;height:17px;box-sizing:border-box;border:1px solid;border-color:#808080 #fff #fff #808080"></div>
<div class="a " style="left:928px;top:782px;width:124px;height:17px;box-sizing:border-box;border:1px solid;border-color:#808080 #fff #fff #808080"></div>
<div class="a " style="left:1054px;top:782px;width:79px;height:17px;box-sizing:border-box;border:1px solid;border-color:#808080 #fff #fff #808080"></div>
<div class="a " style="left:1135px;top:782px;width:23px;height:17px;box-sizing:border-box;border:1px solid;border-color:#808080 #fff #fff #808080"></div>
<div class="a " style="left:1160px;top:782px;width:23px;height:17px;box-sizing:border-box;border:1px solid;border-color:#808080 #fff #fff #808080"></div>
<div class="a " style="left:1185px;top:782px;width:95px;height:17px;box-sizing:border-box;border:1px solid;border-color:#808080 #fff #fff #808080"></div>
<svg class="a" style="left:1163px;top:786px" width="15" height="11" viewBox="0 0 15 11"><rect x="0.5" y="0.5" width="14" height="10" fill="#f0f0f0" stroke="#000"/><path d="M0.5 0.5l7 6 7-6" stroke="#000" fill="none"/><path d="M0 10.5h15" stroke="#000" stroke-width="2"/></svg>
<svg class="a" style="left:1189px;top:785px" width="12" height="12" viewBox="0 0 12 12"><circle cx="6" cy="6" r="5.2" fill="#8a0000" stroke="#600000" stroke-width="0.6"/><path d="M3.5 5a2.5 2.5 0 0 1 2.5-2.5" stroke="#fff" stroke-width="0.9" fill="none"/></svg>
</body></html>
